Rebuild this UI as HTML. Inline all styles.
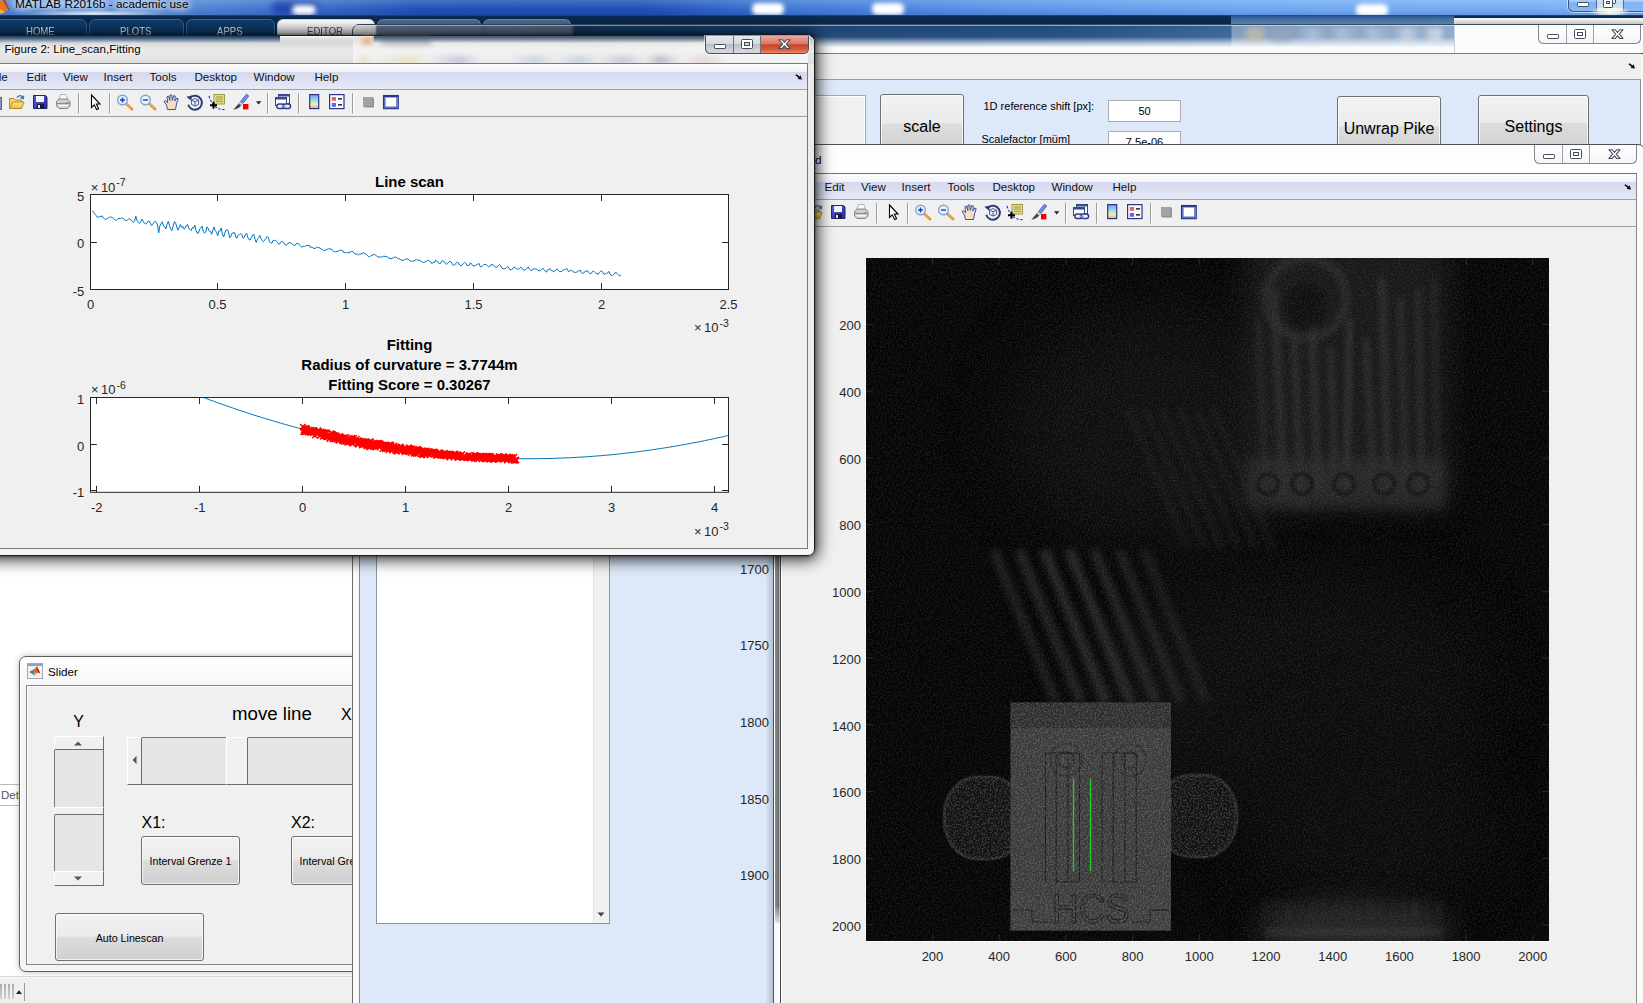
<!DOCTYPE html>
<html lang="en">
<head>
<meta charset="utf-8">
<title>MATLAB R2016b - academic use</title>
<style>
*{box-sizing:border-box;margin:0;padding:0}
html,body{width:1643px;height:1003px;overflow:hidden;background:#fff}
body{position:relative;font-family:"Liberation Sans",sans-serif;font-size:12px;color:#000}
.abs{position:absolute}
.t{position:absolute;white-space:nowrap;line-height:1}
.ui{font-family:"Liberation Sans",sans-serif;font-size:11.6px;color:#111}
.tick{font-size:13px;color:#262626}
.btn{position:absolute;border:1px solid #707070;border-radius:3px;background:linear-gradient(#f2f2f2 0,#ebebeb 48%,#dddddd 50%,#cfcfcf 100%);box-shadow:inset 0 0 0 1px rgba(255,255,255,.7)}
.btn span{position:absolute;left:0;right:0;text-align:center;white-space:nowrap;line-height:1}
.edit{position:absolute;background:#fff;border:1px solid #abadb3}
.menubar{position:absolute;background:linear-gradient(#fdfdfe 0,#f1f3fa 30%,#d5d9ee 34%,#dcdff1 60%,#e6e9f7 100%);border-bottom:1px solid #a0a0a0}
.toolbar{position:absolute;background:#f0f0f0;border-bottom:1px solid #a0a0a0}
.sep{position:absolute;width:1px;background:#a0a0a0;box-shadow:1px 0 0 #fff}
.cap{position:absolute;height:19px;border:1px solid #5a5f66;border-top:none;border-radius:0 0 5.5px 5.5px;overflow:hidden;box-shadow:0 0 0 1px rgba(255,255,255,.55)}
.cap i{position:absolute;top:0;bottom:0;display:block}
</style>
</head>
<body>
<svg width="0" height="0" style="position:absolute">
<defs>
<linearGradient id="gfold" x1="0" y1="0" x2="0" y2="1"><stop offset="0" stop-color="#fbe98f"/><stop offset="1" stop-color="#e9b93a"/></linearGradient>
<linearGradient id="gcb" x1="0" y1="0" x2="0" y2="1"><stop offset="0" stop-color="#8f8fe8"/><stop offset=".4" stop-color="#8fe0ee"/><stop offset=".7" stop-color="#f3f0a0"/><stop offset="1" stop-color="#f0a0a0"/></linearGradient>
<linearGradient id="gsave" x1="0" y1="0" x2="1" y2="1"><stop offset="0" stop-color="#5a5ad8"/><stop offset="1" stop-color="#2a2a98"/></linearGradient>
<g id="tbicons">
 <!-- new (sliver) -->
 <rect x="-12" y="7.5" width="13.5" height="12" fill="#8f94bd" stroke="#5d638f"/>
 <!-- open folder -->
 <path d="M9.5 18.5 L9.5 8.5 L14 8.5 L15.5 10 L21.5 10 L21.5 12" fill="#f4d873" stroke="#b88d1c"/>
 <path d="M9.5 18.5 L12.5 12 L24 12 L21.5 18.5Z" fill="url(#gfold)" stroke="#b88d1c"/>
 <path d="M17 7.5 C19 5 22 5 23 8 M23.8 5.5 L23.2 8.6 L20.4 7.6" fill="none" stroke="#3f6fb8" stroke-width="1.3"/>
 <!-- save -->
 <path d="M33.5 5.5 L45.5 5.5 L47 7 L47 18.5 L33.5 18.5Z" fill="url(#gsave)" stroke="#22227a"/>
 <rect x="36" y="6" width="8" height="6" fill="#f4f4fb"/><rect x="37" y="14" width="7" height="4.5" fill="#1a1a2a"/><rect x="38" y="15" width="2" height="3" fill="#e8e8f0"/>
 <!-- printer -->
 <path d="M59 9.5 L60.5 4.5 L66 4.5 L67.5 9.5Z" fill="#fcfcff" stroke="#8ea3c9" stroke-width=".8"/>
 <path d="M56.5 11.5 L59 9 L67.5 9 L70 11.5 L70 16 L67 18.5 L59 18.5 L56.5 16Z" fill="#cfcfcf" stroke="#7c7c7c" stroke-width=".9"/>
 <path d="M56.5 13.5 L70 13.5" stroke="#8a8a8a"/><path d="M58.5 15.8 L68 15.8" stroke="#f6f6f6" stroke-width="1.4"/><rect x="66.5" y="12" width="1.6" height="1.4" fill="#3bbf3b"/>
 <!-- sep -->
 <path d="M78.5 3 L78.5 23.5 M109.5 3 L109.5 23.5 M267.5 3 L267.5 23.5 M298.5 3 L298.5 23.5 M352.5 3 L352.5 23.5" stroke="#9c9c9c"/>
 <path d="M79.5 3 L79.5 23.5 M110.5 3 L110.5 23.5 M268.5 3 L268.5 23.5 M299.5 3 L299.5 23.5 M353.5 3 L353.5 23.5" stroke="#fdfdfd"/>
 <!-- pointer -->
 <path d="M91.5 5 L91.5 17.5 L94.3 14.8 L96.6 19.6 L98.6 18.7 L96.4 14 L100 14Z" fill="#fff" stroke="#000" stroke-width="1.1" stroke-linejoin="miter"/>
 <!-- zoom in -->
 <path d="M126 13.5 L132 19" stroke="#d98a2b" stroke-width="2.6" stroke-linecap="round"/><path d="M126 13.2 L131.6 18.3" stroke="#f6c46e" stroke-width="1" stroke-linecap="round"/>
 <circle cx="122.5" cy="10" r="4.8" fill="#e9f3fd" stroke="#7fa3d8" stroke-width="1.4"/><path d="M120 10 L125 10 M122.5 7.5 L122.5 12.5" stroke="#1f3f99" stroke-width="1.4"/>
 <!-- zoom out -->
 <path d="M149 13.5 L155 19" stroke="#d98a2b" stroke-width="2.6" stroke-linecap="round"/><path d="M149 13.2 L154.6 18.3" stroke="#f6c46e" stroke-width="1" stroke-linecap="round"/>
 <circle cx="145.5" cy="10" r="4.8" fill="#e9f3fd" stroke="#7fa3d8" stroke-width="1.4"/><path d="M143 10 L148 10" stroke="#1f3f99" stroke-width="1.4"/>
 <!-- hand -->
 <path d="M167.5 19.5 L166.5 15 L164 11.5 L165.3 10.6 L167.6 12.6 L167 6.5 L168.6 6.2 L169.8 10.5 L170 5 L171.8 5 L172.3 10.4 L173.6 5.6 L175.3 6 L174.8 11 L176.8 8 L178.2 8.7 L176.5 14 L175.5 19.5Z" fill="#fbdcc0" stroke="#2f57a8" stroke-width="1" stroke-linejoin="round"/>
 <!-- rotate 3d -->
 <path d="M190.5 7.2 A7 7 0 1 1 188.2 14.8" fill="none" stroke="#2b3c73" stroke-width="2"/><path d="M186.3 6.8 L192 5.6 L191.2 10.8Z" fill="#2b3c73"/>
 <path d="M191.5 10.2 L195 8.6 L198.6 10.2 L198.6 14.4 L195 16 L191.5 14.4Z M191.5 10.2 L195 11.8 L198.6 10.2 M195 11.8 L195 16" fill="#eef1fb" stroke="#3a4f96" stroke-width=".9"/>
 <!-- data cursor -->
 <path d="M209 6 C210.5 11 213 15 216 17.2 C219 19.2 222 19.6 224.5 19.6" fill="none" stroke="#2222e0" stroke-width="1.1" stroke-dasharray="2.4 1.6"/>
 <rect x="214" y="4.5" width="10.5" height="9.5" fill="#e4dd85" stroke="#99923a" stroke-width=".9"/><path d="M216 7 L223 7 M216 9.2 L223 9.2 M216 11.4 L223 11.4" stroke="#8a8440" stroke-width=".8"/>
 <path d="M210 15.2 L217 15.2 M213.5 11.8 L213.5 18.8" stroke="#000" stroke-width="2"/>
 <!-- brush -->
 <path d="M240.5 11.5 L246.5 4.2 L248.8 6 L242.8 13.4Z" fill="#6f8fe0" stroke="#3d55a8" stroke-width=".8"/><path d="M240.5 11.5 L242.8 13.4 L241 15.6 L238.7 13.8Z" fill="#d0d0d0" stroke="#777" stroke-width=".6"/>
 <path d="M238.7 13.8 L241 15.6 C240 18 236.5 19.4 233.2 19.6 C235.4 18 236.4 15.6 238.7 13.8Z" fill="#454545"/>
 <rect x="243" y="14" width="5.4" height="5.4" fill="#f00000"/>
 <path d="M256 11.2 L261.4 11.2 L258.7 14.4Z" fill="#222"/>
 <!-- link -->
 <rect x="278.5" y="4.5" width="11" height="9" fill="#fdfdff" stroke="#34488f"/><rect x="278.5" y="4.5" width="11" height="2" fill="#34488f"/>
 <rect x="275.5" y="7.5" width="11" height="8" fill="#fdfdff" stroke="#34488f"/><rect x="275.5" y="7.5" width="11" height="2" fill="#34488f"/>
 <rect x="276.8" y="14" width="7.6" height="4.6" rx="2.3" fill="#eef1fa" stroke="#2d3f86" stroke-width="1.5"/>
 <rect x="283" y="14" width="7.6" height="4.6" rx="2.3" fill="#eef1fa" stroke="#2d3f86" stroke-width="1.5"/>
 <path d="M281.5 16.3 L286 16.3" stroke="#8fa0d8" stroke-width="1.2"/>
 <!-- colorbar -->
 <rect x="309.7" y="4.6" width="9" height="14" fill="url(#gcb)" stroke="#27358a" stroke-width="1.2"/>
 <!-- legend -->
 <rect x="329.6" y="4.6" width="14.4" height="14" fill="#fafbff" stroke="#27358a" stroke-width="1.2"/>
 <rect x="331.8" y="7" width="4.2" height="3.8" fill="#e46464"/><rect x="331.8" y="13" width="4.2" height="3.8" fill="#6464e4"/><path d="M338 8.9 L342 8.9 M338 14.9 L342 14.9" stroke="#000" stroke-width="1.1"/>
 <!-- gray square -->
 <rect x="364.5" y="8.5" width="9.5" height="9" fill="#8e8e8e"/><rect x="363.5" y="7.5" width="9.5" height="9" fill="#a2a2a2" stroke="#8a8a8a" stroke-width=".6"/>
 <!-- dock -->
 <rect x="383.6" y="5.6" width="14.6" height="13" fill="#fff" stroke="#27358a" stroke-width="1.3"/><rect x="383.6" y="5.6" width="14.6" height="1.8" fill="#27358a"/>
 <path d="M384 7.5 L385.6 7.5 L385.6 16.5 L384 16.5Z M396.2 7.5 L397.8 7.5 L397.8 16.5 L396.2 16.5Z M384 16.5 L397.8 16.5 L397.8 18.2 L384 18.2Z" fill="#5b6fc0"/>
</g>
</defs>
</svg>
<!-- ===== MATLAB main window (bottom layer) ===== -->
<div class="abs" id="mtitle" style="left:0;top:0;width:1643px;height:15px;background:linear-gradient(90deg,#4d86d6 0,#5f94dc 120px,#3a6fcb 300px,#1f52b6 420px,#1d50b4 640px,#3f7ad8 800px,#5a94e8 1000px,#6ea8f4 1250px,#78b0f6 1643px)"></div>
<div class="abs" style="left:0;top:0;width:1643px;height:15px;background:linear-gradient(rgba(255,255,255,.18) 0,rgba(255,255,255,0) 60%,rgba(0,0,40,.12) 100%)"></div>
<!-- glass reflections -->
<div class="abs" style="left:20px;top:10px;width:150px;height:6px;background:radial-gradient(ellipse at 50% 60%,rgba(255,255,255,.85) 0,rgba(255,255,255,0) 70%)"></div>
<div class="abs" style="left:272px;top:2px;width:46px;height:13px;border-radius:5px;background:#1d3fa8;filter:blur(3px);opacity:.8"></div>
<div class="abs" style="left:292px;top:5px;width:24px;height:10px;border-radius:5px;background:#fff;filter:blur(2.5px)"></div>
<div class="abs" style="left:752px;top:3px;width:32px;height:12px;border-radius:5px;background:#fff;filter:blur(2px)"></div>
<div class="abs" style="left:872px;top:3px;width:32px;height:12px;border-radius:5px;background:#fff;filter:blur(2px)"></div>
<div class="abs" style="left:1356px;top:4px;width:32px;height:12px;border-radius:5px;background:#fff;filter:blur(2px)"></div>
<!-- matlab logo sliver -->
<svg class="abs" style="left:0;top:0" width="12" height="14" viewBox="0 0 12 14"><path d="M0 1 L3 0 L8 9 L5 12 L0 13Z" fill="#e8731c"/><path d="M3 0 L5 0 L10 11 L8 9Z" fill="#a8321a"/><path d="M0 9 L5 12 L0 14Z" fill="#f7b13c"/></svg>
<div class="t" style="left:15px;top:-1.7px;font-size:11.75px;color:#000;text-shadow:0 0 6px #fff,0 0 8px #fff,0 0 10px rgba(255,255,255,.9)">MATLAB R2016b - academic use</div>
<!-- main caption buttons (top right) -->
<div class="cap" style="left:1568px;top:-8px;width:82px;height:19.5px;border-color:#3c5a8e;background:linear-gradient(rgba(255,255,255,.42) 0,rgba(255,255,255,.22) 50%,rgba(110,165,235,.3) 54%,rgba(160,200,250,.45) 100%)">
 <i style="left:27px;width:1px;background:#4f6c9c"></i><i style="left:54.2px;width:1px;background:#4f6c9c"></i>
 <i style="left:28px;width:26px;background:linear-gradient(rgba(255,255,255,.25),rgba(255,252,230,.75))"></i>
</div>
<div class="abs" style="left:1590px;top:8px;width:40px;height:9px;background:radial-gradient(ellipse at 50% 40%,rgba(255,255,255,.95) 0,rgba(255,253,235,.7) 40%,rgba(255,255,255,0) 72%)"></div>
<div class="abs" style="left:1577.3px;top:2px;width:11.7px;height:4.8px;background:#fff;border:1.2px solid #434c66;border-radius:1.2px"></div>
<div class="abs" style="left:1606px;top:-5px;width:9.5px;height:9px;border:1.2px solid #434c66;background:#e9eef8;border-radius:1.2px"></div>
<div class="abs" style="left:1603px;top:-2.5px;width:10px;height:10px;border:1.2px solid #434c66;background:#fff;border-radius:1.2px"></div>
<div class="abs" style="left:1606px;top:.8px;width:4.2px;height:3.6px;border:1.2px solid #434c66;background:#dfe5f2"></div>
<!-- toolstrip dark band -->
<div class="abs" style="left:0;top:14.5px;width:1643px;height:22px;background:linear-gradient(#1f4a8c 0,#0a2c55 1.5px,#08284c 5px,#0a2d55 100%)"></div>
<!-- tabs -->
<div class="abs" style="left:-10px;top:19px;width:97px;height:20px;border:1px solid #3d6791;border-radius:6px 6px 0 0;background:linear-gradient(#0e3a69,#0f3d6d)"></div>
<div class="abs" style="left:89px;top:19px;width:95px;height:20px;border:1px solid #3d6791;border-radius:6px 6px 0 0;background:linear-gradient(#0e3a69,#0f3d6d)"></div>
<div class="abs" style="left:186px;top:19px;width:89px;height:20px;border:1px solid #3d6791;border-radius:6px 6px 0 0;background:linear-gradient(#0e3a69,#0f3d6d)"></div>
<div class="abs" style="left:277px;top:19px;width:98px;height:20px;border:1px solid #d8d8d8;border-radius:6px 6px 0 0;background:linear-gradient(#ffffff,#e9e9e9)"></div>
<div class="t" style="left:26px;top:26.4px;font-size:11px;color:#eef2f7;transform:scaleX(.87);transform-origin:0 0">HOME</div>
<div class="t" style="left:119.5px;top:26.4px;font-size:11px;color:#eef2f7;transform:scaleX(.87);transform-origin:0 0">PLOTS</div>
<div class="t" style="left:217px;top:26.4px;font-size:11px;color:#eef2f7;transform:scaleX(.87);transform-origin:0 0">APPS</div>
<div class="t" style="left:307px;top:26.4px;font-size:11px;color:#4a4a4a;transform:scaleX(.87);transform-origin:0 0">EDITOR</div>
<div class="abs" style="left:376.7px;top:19px;width:104.3px;height:20px;border:1px solid #6886a8;border-bottom:none;border-radius:6px 6px 0 0;background:linear-gradient(#4a6b90,#3c5c82)"></div>
<div class="abs" style="left:483px;top:19px;width:88px;height:20px;border:1px solid #6886a8;border-bottom:none;border-radius:6px 6px 0 0;background:linear-gradient(#4a6b90,#3c5c82)"></div>
<!-- quick access strip + search -->
<div class="abs" style="left:1231px;top:15px;width:223px;height:12px;background:linear-gradient(#1b4a82 0,#3c6a9f 3px,#5a82ae 10px)"></div>
<div class="abs" style="left:1454px;top:18.3px;width:189px;height:8px;background:linear-gradient(#fbfbfb 0,#ececec 2px,#c9c9c9 5.5px)"></div>
<!-- editor white area + status bar -->
<div class="abs" style="left:0;top:540px;width:360px;height:437px;background:#fff"></div>
<div class="abs" style="left:0;top:976px;width:360px;height:27px;background:#f0f0f0;border-top:1px solid #d9d9d9"></div>
<div class="abs" style="left:0;top:977px;width:360px;height:1px;background:#fbfbfb"></div>
<div class="abs" style="left:0;top:984px;width:14px;height:15px;background:repeating-linear-gradient(90deg,#a9a9a9 0,#a9a9a9 2px,#f0f0f0 2px,#f0f0f0 4px);-webkit-mask-image:linear-gradient(#000,rgba(0,0,0,.4));mask-image:linear-gradient(#000,rgba(0,0,0,.4))"></div>
<svg class="abs" style="left:16px;top:990px" width="6" height="4"><path d="M0 4 L3 0.3 L6 4Z" fill="#222"/></svg>
<div class="abs" style="left:24px;top:983px;width:1px;height:18px;background:#9a9a9a"></div>
<!-- "Det" tab -->
<div class="abs" style="left:-2px;top:784px;width:22px;height:22px;border:1px solid #b9b9b9;background:#fff"></div>
<div class="t" style="left:1px;top:790px;font-size:11.5px;color:#555">Det</div>
<!-- ===== Slider window ===== -->
<div class="abs" id="sliderwin" style="left:19px;top:656px;width:420px;height:316px;border:1px solid #5d5d5d;border-radius:7px;background:linear-gradient(#fdfdfd,#f6f6f6 30px,#f4f4f4);box-shadow:0 0 6px rgba(0,0,0,.28),inset 0 0 0 1px #fff"></div>
<div class="abs" style="left:26px;top:685px;width:420px;height:280px;border:1px solid #868686;background:#f0f0f0;box-shadow:inset 1px 1px 0 #fff"></div>
<!-- icon -->
<svg class="abs" style="left:27px;top:663px" width="16" height="16" viewBox="0 0 16 16">
<rect x="0.5" y="0.5" width="15" height="15" fill="#f4f4f4" stroke="#a3a9b3"/><rect x="1" y="1" width="14" height="2" fill="#7ea3d0"/>
<path d="M2 9 L6.5 6.5 L8 9 L6.8 12 L5 10.8Z" fill="#3f7fc4"/><path d="M6.5 6.5 C8 5.5 9 4 9.8 3.3 C10.6 4 11.5 7 13.3 10.6 C12.3 10 11.6 9.4 11 9.3 C10 10.3 9 12 7.5 13 L6.8 12 L8 9Z" fill="#e8661c"/><path d="M9.8 3.3 C10.6 4 11.5 7 13.3 10.6 C12.3 10 11.6 9.4 11 9.3 C10.5 7 10.2 5 9.8 3.3Z" fill="#8e1d13"/><path d="M6.8 12 L7.5 13 C8.3 12.4 9 11.4 9.5 10.6 L8 9Z" fill="#f8bd3a"/>
</svg>
<div class="t" style="left:48px;top:665.5px;font-size:11.7px;color:#000;text-shadow:0 0 5px #fff">Slider</div>
<div class="t" style="left:73px;top:714px;font-size:16px;width:11px;text-align:center">Y</div>
<div class="t" style="left:232px;top:705.3px;font-size:18.67px">move line</div>
<div class="t" style="left:341px;top:707px;font-size:16px">X</div>
<div class="t" style="left:141.5px;top:815px;font-size:16px">X1:</div>
<div class="t" style="left:291px;top:815px;font-size:16px">X2:</div>
<!-- vertical slider -->
<div class="abs" style="left:53.5px;top:736px;width:50px;height:149.5px;background:#e6e6e6;border-left:1px solid #7a7a7a;border-right:1.5px solid #6d6d6d;border-bottom:1.5px solid #6d6d6d"></div>
<div class="abs" style="left:53.5px;top:736px;width:50px;height:14px;background:#f0f0f0;border-top:1px solid #fff;border-left:1px solid #fff;border-right:1.5px solid #6d6d6d;border-bottom:1.5px solid #6d6d6d"></div>
<div class="abs" style="left:53.5px;top:806.5px;width:50px;height:8.5px;background:#f0f0f0;border-top:1px solid #fff;border-left:1px solid #fff;border-right:1.5px solid #6d6d6d;border-bottom:1.5px solid #6d6d6d"></div>
<div class="abs" style="left:53.5px;top:870.5px;width:50px;height:15px;background:#f0f0f0;border-top:1px solid #fff;border-left:1px solid #fff;border-right:1.5px solid #6d6d6d;border-bottom:1.5px solid #6d6d6d"></div>
<svg class="abs" style="left:74px;top:741px" width="8" height="5"><path d="M0 4.5 L4 0.5 L8 4.5Z" fill="#555"/></svg>
<svg class="abs" style="left:74px;top:876px" width="8" height="5"><path d="M0 0.5 L4 4.5 L8 0.5Z" fill="#555"/></svg>
<!-- horizontal slider -->
<div class="abs" style="left:126.5px;top:737px;width:300px;height:48px;background:#e6e6e6;border-top:1px solid #7a7a7a;border-bottom:1.5px solid #6d6d6d"></div>
<div class="abs" style="left:126.5px;top:737px;width:15px;height:48px;background:#f0f0f0;border-top:1px solid #fff;border-left:1px solid #fff;border-right:1.5px solid #6d6d6d;border-bottom:1.5px solid #6d6d6d"></div>
<div class="abs" style="left:225.5px;top:737px;width:22px;height:48px;background:#f0f0f0;border-top:1px solid #fff;border-left:1.5px solid #fff;border-right:1.5px solid #6d6d6d;border-bottom:1.5px solid #6d6d6d"></div>
<svg class="abs" style="left:131.5px;top:756px" width="5" height="8"><path d="M4.5 0 L0.5 4 L4.5 8Z" fill="#555"/></svg>
<!-- buttons -->
<div class="btn" style="left:141px;top:836px;width:99px;height:49px"><span style="top:18.5px;font-size:10.7px">Interval Grenze 1</span></div>
<div class="btn" style="left:291px;top:836px;width:99px;height:49px"><span style="top:18.5px;font-size:10.7px">Interval Grenze 2</span></div>
<div class="btn" style="left:55px;top:913px;width:149px;height:48px"><span style="top:18.5px;font-size:10.7px">Auto Linescan</span></div>
<!-- ===== Middle GUI window ===== -->
<!-- glass title bar -->
<div class="abs" style="left:352px;top:24px;width:1300px;height:30px;border:1px solid #3c4a5e;border-radius:7px 7px 0 0;background:linear-gradient(90deg,#ececec 0,#e2e2e2 22px,#5f748b 24px,#5a6f87 128px,#4f6580 131px,#5a6f87 134px,#55697f 218px,#14385f 222px,#123a66 300px,#1c4474 462px,#214b7f 700px,#3a6498 878px,#7d9cc0 879px,#8eaacb 1101px,#fcfcfc 1102px)"></div>
<div class="abs" style="left:353px;top:25px;width:1300px;height:1px;background:rgba(255,255,255,.5)"></div>
<!-- fade dark -> white towards bottom -->
<div class="abs" style="left:814px;top:26px;width:640px;height:27px;background:linear-gradient(rgba(255,255,255,0) 0,rgba(255,255,255,.04) 40%,rgba(255,255,255,.6) 62%,#fbfbfb 80%)"></div>
<!-- blurred icons in quick-access -->
<div class="abs" style="left:1242px;top:27px;width:200px;height:15px;filter:blur(2.5px);opacity:.6;background:linear-gradient(90deg,rgba(0,0,0,0) 0,#d8c8a0 8px,#d8c8a0 18px,rgba(0,0,0,0) 26px,#9aa4b8 34px,#9aa4b8 46px,rgba(0,0,0,0) 54px,#c4d0e4 70px,rgba(0,0,0,0) 86px,#c4d0e4 100px,rgba(0,0,0,0) 118px,#c4d0e4 130px,rgba(0,0,0,0) 150px,#e8e8f0 165px,rgba(0,0,0,0) 180px,#e8e8f0 190px)"></div>
<!-- caption buttons -->
<div class="cap" style="left:1538.0px;top:25.0px;width:102.5px;height:18.5px;border-color:#7f858f;background:linear-gradient(#fefefe,#f5f5f5)">
 <i style="left:27.2px;width:1px;background:#9a9fa8"></i><i style="left:54.2px;width:1px;background:#9a9fa8"></i>
</div>
<div class="abs" style="left:1546.7px;top:33.5px;width:12.3px;height:5.2px;background:#fff;border:1.2px solid #434a5c;border-radius:1.2px"></div>
<div class="abs" style="left:1573.7px;top:28.7px;width:12.3px;height:10px;border:1.2px solid #434a5c;background:#fff;border-radius:1.5px"></div>
<div class="abs" style="left:1576.6px;top:31.8px;width:6.5px;height:4px;border:1.2px solid #434a5c;background:#fff"></div>
<svg class="abs" style="left:1611.2px;top:28.7px" width="13" height="10.2" viewBox="0 0 14 11" preserveAspectRatio="none"><path d="M1 0.8 L4.6 0.8 L7 3.6 L9.4 0.8 L13 0.8 L8.9 5.5 L13 10.2 L9.4 10.2 L7 7.4 L4.6 10.2 L1 10.2 L5.1 5.5Z" fill="#fff" stroke="#434a5c" stroke-width="1.15" stroke-linejoin="round"/></svg>
<div class="abs" style="left:358px;top:24px;width:1285px;height:1px;background:#3c4a5e"></div>
<!-- left frame -->
<div class="abs" style="left:352px;top:54px;width:8px;height:960px;background:#fafafa;border-left:1px solid #6e6e6e;border-right:1px solid #8a8a8a"></div>
<!-- right frame -->
<div class="abs" style="left:1640px;top:54px;width:8px;height:960px;background:#fafafa;border-left:1px solid #8a8a8a"></div>
<!-- menubar -->
<div class="abs" style="left:360px;top:53px;width:1281px;height:27px;background:#f0f0f0;border-top:1px solid #7b7b7b;border-bottom:1px solid #9a9a9a"></div>
<svg class="abs" style="left:1627.5px;top:62.8px" width="7" height="6" viewBox="0 0 7 6"><path d="M0.3 1.2 L1.6 0.2 L4.6 2.6 L5.6 1.3 L7 5.6 L2.6 5 L3.6 3.8 L0.3 1.2Z" fill="#0a0a0a"/></svg>
<!-- blue panel -->
<div class="abs" style="left:360px;top:80px;width:1280px;height:930px;background:#dde9f9"></div>
<!-- panel widgets (top strip) -->
<div class="abs" style="left:800px;top:95px;width:66px;height:60px;background:#f0f0f0;border:1px solid #a7a7a7;box-shadow:inset -1px 1px 0 #fff"></div>
<div class="btn" style="left:880px;top:94px;width:84px;height:60px"><span style="top:23.5px;font-size:16px">scale</span></div>
<div class="t" style="left:983.5px;top:101px;font-size:11px">1D reference shift [px]:</div>
<div class="t" style="left:981.5px;top:133.5px;font-size:11px">Scalefactor [müm]</div>
<div class="edit" style="left:1108px;top:100px;width:73px;height:22px"></div>
<div class="t" style="left:1108px;width:73px;text-align:center;top:106px;font-size:11px">50</div>
<div class="edit" style="left:1108px;top:131px;width:73px;height:22px"></div>
<div class="t" style="left:1108px;width:73px;text-align:center;top:136.5px;font-size:11px">7.5e-06</div>
<div class="btn" style="left:1337px;top:96px;width:104px;height:62px"><span style="top:23.5px;font-size:16px">Unwrap Pike</span></div>
<div class="btn" style="left:1478px;top:95px;width:111px;height:57px"><span style="top:23px;font-size:16px">Settings</span></div>
<!-- listbox -->
<div class="abs" style="left:376px;top:500px;width:234px;height:424px;background:#fff;border:1px solid #8b94a3"></div>
<div class="abs" style="left:593px;top:501px;width:16px;height:422px;background:#f0f0f0;border-left:1px solid #e3e3e3"></div>
<svg class="abs" style="left:597px;top:912px" width="8" height="5"><path d="M0.5 0.5 L4 4.5 L7.5 0.5Z" fill="#444"/></svg>
<!-- axes tick labels -->
<div class="t tick" style="right:874px;top:563.2px">1700</div>
<div class="t tick" style="right:874px;top:639.3px">1750</div>
<div class="t tick" style="right:874px;top:716px">1800</div>
<div class="t tick" style="right:874px;top:792.7px">1850</div>
<div class="t tick" style="right:874px;top:869.3px">1900</div>
<!-- ===== Third window: figure with image ===== -->
<!-- soft shadow on left of frame -->
<div class="abs" style="left:765px;top:150px;width:9px;height:860px;background:linear-gradient(90deg,rgba(60,70,90,0),rgba(60,70,90,.28))"></div>
<div class="abs" id="w3" style="left:773px;top:144px;width:871.5px;height:870px;border:1px solid #4f5258;border-radius:7px 7px 0 0;background:linear-gradient(#fdfdfd,#fbfbfb)"></div>
<!-- left frame fill -->
<div class="abs" style="left:774px;top:174px;width:7px;height:749px;background:linear-gradient(90deg,#fff 0,#fff 1px,#888c91 1.4px,#66686a 5px,#b4b4b4 5.2px,#b4b4b4 6px,#333 6.2px)"></div>
<div class="abs" style="left:774px;top:905px;width:6px;height:100px;background:linear-gradient(rgba(255,255,255,0),#fafafa 22px)"></div>
<div class="abs" style="left:780px;top:174px;width:1px;height:840px;background:#4a4a4a"></div>
<!-- client -->
<div class="abs" style="left:781px;top:173px;width:856px;height:840px;background:#f0f0f0;border-top:1px solid #6f6f6f;border-right:1px solid #8a8a8a;border-left:1px solid #fff"></div>
<div class="t" style="left:815px;top:153.6px;font-size:11.7px;color:#000">d</div>
<!-- caption buttons -->
<div class="cap" style="left:1534.3px;top:145.0px;width:102.5px;height:18.5px;border-color:#7f858f;background:linear-gradient(#fefefe,#f5f5f5)">
 <i style="left:27.2px;width:1px;background:#9a9fa8"></i><i style="left:54.2px;width:1px;background:#9a9fa8"></i>
</div>
<div class="abs" style="left:1543.0px;top:153.5px;width:12.3px;height:5.2px;background:#fff;border:1.2px solid #434a5c;border-radius:1.2px"></div>
<div class="abs" style="left:1570.0px;top:148.7px;width:12.3px;height:10px;border:1.2px solid #434a5c;background:#fff;border-radius:1.5px"></div>
<div class="abs" style="left:1572.8999999999999px;top:151.8px;width:6.5px;height:4px;border:1.2px solid #434a5c;background:#fff"></div>
<svg class="abs" style="left:1607.5px;top:148.7px" width="13" height="10.2" viewBox="0 0 14 11" preserveAspectRatio="none"><path d="M1 0.8 L4.6 0.8 L7 3.6 L9.4 0.8 L13 0.8 L8.9 5.5 L13 10.2 L9.4 10.2 L7 7.4 L4.6 10.2 L1 10.2 L5.1 5.5Z" fill="#fff" stroke="#434a5c" stroke-width="1.15" stroke-linejoin="round"/></svg>
<div class="abs" style="left:779px;top:144px;width:860px;height:1px;background:#4f5258"></div>
<!-- menubar -->
<div class="menubar" style="left:781px;top:174px;width:855px;height:26px"></div>
<div class="t ui" style="left:824.5px;top:181px">Edit</div>
<div class="t ui" style="left:861px;top:181px">View</div>
<div class="t ui" style="left:901.5px;top:181px">Insert</div>
<div class="t ui" style="left:947.5px;top:181px">Tools</div>
<div class="t ui" style="left:992.5px;top:181px">Desktop</div>
<div class="t ui" style="left:1051.5px;top:181px">Window</div>
<div class="t ui" style="left:1112.5px;top:181px">Help</div>
<svg class="abs" style="left:1624.3px;top:183.6px" width="7" height="6" viewBox="0 0 7 6"><path d="M0.3 1.2 L1.6 0.2 L4.6 2.6 L5.6 1.3 L7 5.6 L2.6 5 L3.6 3.8 L0.3 1.2Z" fill="#0a0a0a"/></svg>
<!-- toolbar -->
<div class="toolbar" style="left:781px;top:200px;width:855px;height:27px"></div>
<div id="tb3" class="abs" style="left:798px;top:200px;width:420px;height:26px"><svg width="420" height="26" viewBox="0 0 420 26"><use href="#tbicons"/></svg></div>
<!-- image axes -->
<div class="abs" style="left:865px;top:258px;width:684px;height:684px;background:#fbfbfb"></div>
<svg class="abs" style="left:866px;top:258px" width="683" height="683" viewBox="0 0 683 683">
<defs>
<filter id="nz" x="0" y="0" width="100%" height="100%" color-interpolation-filters="sRGB"><feTurbulence type="fractalNoise" baseFrequency="0.62" numOctaves="2" seed="3" result="t"/><feColorMatrix type="matrix" values="0 0 0 0 1  0 0 0 0 1  0 0 0 0 1  4.2 0 0 0 -1.85"/><feComposite operator="in" in2="SourceGraphic"/></filter>
<filter id="nz2" x="0" y="0" width="100%" height="100%" color-interpolation-filters="sRGB"><feTurbulence type="fractalNoise" baseFrequency="0.75" numOctaves="2" seed="11"/><feColorMatrix type="matrix" values="0 0 0 0 0  0 0 0 0 0  0 0 0 0 0  0 2.2 0 0 -0.75"/><feComposite operator="in" in2="SourceGraphic"/></filter>
<filter id="b3" x="-100%" y="-100%" width="300%" height="300%" color-interpolation-filters="sRGB"><feGaussianBlur stdDeviation="3"/></filter>
<filter id="b6" x="-100%" y="-100%" width="300%" height="300%" color-interpolation-filters="sRGB"><feGaussianBlur stdDeviation="6"/></filter>
<filter id="b12" x="-100%" y="-100%" width="300%" height="300%" color-interpolation-filters="sRGB"><feGaussianBlur stdDeviation="14"/></filter>
<filter id="b25" x="-100%" y="-100%" width="300%" height="300%" color-interpolation-filters="sRGB"><feGaussianBlur stdDeviation="28"/></filter>
<filter id="b1" x="-100%" y="-100%" width="300%" height="300%" color-interpolation-filters="sRGB"><feGaussianBlur stdDeviation="1.2"/></filter>
<clipPath id="cimg"><rect x="0" y="0" width="683" height="683"/></clipPath>
<clipPath id="cchip"><rect x="144.5" y="444.5" width="160.5" height="228"/></clipPath>
<clipPath id="ctr"><rect x="360" y="0" width="250" height="285"/></clipPath>
</defs>
<g clip-path="url(#cimg)">
<rect width="683" height="683" fill="#050505"/>
<ellipse cx="290" cy="170" rx="150" ry="120" fill="#0e0e0e" filter="url(#b25)"/>
<ellipse cx="420" cy="430" rx="200" ry="120" fill="#0c0c0c" filter="url(#b25)"/>
<ellipse cx="500" cy="560" rx="120" ry="100" fill="#0b0b0b" filter="url(#b25)"/>
<g clip-path="url(#ctr)">
<rect x="380" y="-20" width="204" height="272" rx="20" fill="#181818" filter="url(#b12)"/>
<path d="M392 60 L400 230" stroke="#3e3e3e" stroke-width="5" opacity="0.4" filter="url(#b3)" fill="none"/>
<path d="M408 30 L418 240" stroke="#3e3e3e" stroke-width="6" opacity="0.55" filter="url(#b3)" fill="none"/>
<path d="M428 80 L436 250" stroke="#3e3e3e" stroke-width="5" opacity="0.6" filter="url(#b3)" fill="none"/>
<path d="M446 60 L452 235" stroke="#3e3e3e" stroke-width="6" opacity="0.6" filter="url(#b3)" fill="none"/>
<path d="M464 90 L470 230" stroke="#3e3e3e" stroke-width="5" opacity="0.6" filter="url(#b3)" fill="none"/>
<path d="M484 60 L480 235" stroke="#3e3e3e" stroke-width="6" opacity="0.65" filter="url(#b3)" fill="none"/>
<path d="M500 80 L508 235" stroke="#3e3e3e" stroke-width="5" opacity="0.6" filter="url(#b3)" fill="none"/>
<path d="M516 20 L522 230" stroke="#3e3e3e" stroke-width="6" opacity="0.6" filter="url(#b3)" fill="none"/>
<path d="M534 40 L540 235" stroke="#3e3e3e" stroke-width="5" opacity="0.55" filter="url(#b3)" fill="none"/>
<path d="M552 30 L556 235" stroke="#3e3e3e" stroke-width="5" opacity="0.5" filter="url(#b3)" fill="none"/>
<path d="M568 20 L572 225" stroke="#3e3e3e" stroke-width="5" opacity="0.4" filter="url(#b3)" fill="none"/>
<ellipse cx="440" cy="40" rx="40" ry="40" fill="none" stroke="#303030" stroke-width="8" opacity=".7" filter="url(#b3)"/>
<ellipse cx="440" cy="48" rx="20" ry="24" fill="#0e0e0e" opacity=".8" filter="url(#b3)"/>
<rect x="380" y="200" width="200" height="50" fill="#2c2c2c" opacity=".7" filter="url(#b6)"/>
<circle cx="402" cy="226" r="10" fill="none" stroke="#101010" stroke-width="4" opacity=".7" filter="url(#b1)"/>
<circle cx="436" cy="226" r="10" fill="none" stroke="#101010" stroke-width="4" opacity=".7" filter="url(#b1)"/>
<circle cx="478" cy="226" r="10" fill="none" stroke="#101010" stroke-width="4" opacity=".7" filter="url(#b1)"/>
<circle cx="518" cy="226" r="10" fill="none" stroke="#101010" stroke-width="4" opacity=".7" filter="url(#b1)"/>
<circle cx="552" cy="226" r="10" fill="none" stroke="#101010" stroke-width="4" opacity=".7" filter="url(#b1)"/>
</g>
<g filter="url(#b3)">
<path d="M128 292 L190 444" stroke="#2e2e2e" stroke-width="10" opacity="0.55" fill="none"/>
<path d="M153 292 L215 444" stroke="#2e2e2e" stroke-width="10" opacity="0.67" fill="none"/>
<path d="M178 292 L240 444" stroke="#2e2e2e" stroke-width="10" opacity="0.79" fill="none"/>
<path d="M203 292 L265 444" stroke="#2e2e2e" stroke-width="10" opacity="0.79" fill="none"/>
<path d="M228 292 L290 444" stroke="#2e2e2e" stroke-width="10" opacity="0.67" fill="none"/>
<path d="M253 292 L315 444" stroke="#2e2e2e" stroke-width="10" opacity="0.55" fill="none"/>
<path d="M278 292 L340 444" stroke="#2e2e2e" stroke-width="10" opacity="0.43" fill="none"/>
</g>
<g filter="url(#b3)" opacity=".55">
<path d="M262 150 L322 290" stroke="#222" stroke-width="6" fill="none"/>
<path d="M279 150 L339 290" stroke="#222" stroke-width="6" fill="none"/>
<path d="M296 150 L356 290" stroke="#222" stroke-width="6" fill="none"/>
<path d="M313 150 L373 290" stroke="#222" stroke-width="6" fill="none"/>
<path d="M330 150 L390 290" stroke="#222" stroke-width="6" fill="none"/>
<path d="M347 150 L407 290" stroke="#222" stroke-width="6" fill="none"/>
</g>
<ellipse cx="488" cy="672" rx="100" ry="26" fill="#262626" filter="url(#b12)"/>
<g filter="url(#b3)" opacity=".8">
<path d="M400.0 642 L400.0 662" stroke="#444" stroke-width="4" opacity="0.43"/>
<path d="M411.5 642 L411.5 662" stroke="#444" stroke-width="4" opacity="0.36"/>
<path d="M423.0 642 L423.0 662" stroke="#444" stroke-width="4" opacity="0.56"/>
<path d="M434.5 642 L434.5 662" stroke="#444" stroke-width="4" opacity="0.33"/>
<path d="M446.0 642 L446.0 662" stroke="#444" stroke-width="4" opacity="0.51"/>
<path d="M457.5 642 L457.5 662" stroke="#444" stroke-width="4" opacity="0.45"/>
<path d="M469.0 642 L469.0 662" stroke="#444" stroke-width="4" opacity="0.32"/>
<path d="M480.5 642 L480.5 662" stroke="#444" stroke-width="4" opacity="0.50"/>
<path d="M492.0 642 L492.0 662" stroke="#444" stroke-width="4" opacity="0.31"/>
<path d="M503.5 642 L503.5 662" stroke="#444" stroke-width="4" opacity="0.47"/>
<path d="M515.0 642 L515.0 662" stroke="#444" stroke-width="4" opacity="0.33"/>
<path d="M526.5 642 L526.5 662" stroke="#444" stroke-width="4" opacity="0.34"/>
<path d="M538.0 642 L538.0 662" stroke="#444" stroke-width="4" opacity="0.47"/>
<path d="M549.5 642 L549.5 662" stroke="#444" stroke-width="4" opacity="0.63"/>
<path d="M561.0 642 L561.0 662" stroke="#444" stroke-width="4" opacity="0.35"/>
<path d="M572.5 642 L572.5 662" stroke="#444" stroke-width="4" opacity="0.39"/>
<path d="M400 674 L575 674" stroke="#363636" stroke-width="6"/>
</g>
<rect x="77" y="518" width="82" height="84" rx="34" ry="40" fill="#111111"/>
<rect x="78" y="519" width="80" height="82" rx="33" ry="39" fill="none" stroke="#303030" stroke-width="2" filter="url(#b1)"/>
<rect x="77" y="518" width="82" height="84" rx="34" ry="40" fill="#fff" filter="url(#nz)" opacity=".11"/>
<rect x="290" y="516" width="82" height="84" rx="34" ry="40" fill="#111111"/>
<rect x="291" y="517" width="80" height="82" rx="33" ry="39" fill="none" stroke="#303030" stroke-width="2" filter="url(#b1)"/>
<rect x="290" y="516" width="82" height="84" rx="34" ry="40" fill="#fff" filter="url(#nz)" opacity=".11"/>
<rect x="144.5" y="444.5" width="160.5" height="228" fill="#404040"/>
<g clip-path="url(#cchip)">
<rect x="144" y="444" width="162" height="26" fill="#2c2c2c" opacity=".6"/>
<rect x="144" y="640" width="162" height="33" fill="#444" opacity=".5"/>
<circle cx="200" cy="502" r="4" fill="none" stroke="#4e4e4e" stroke-width="1.6" opacity=".7"/>
<circle cx="200" cy="502" r="8" fill="none" stroke="#2a2a2a" stroke-width="1.6" opacity=".7"/>
<circle cx="200" cy="502" r="12" fill="none" stroke="#4c4c4c" stroke-width="1.6" opacity=".7"/>
<circle cx="200" cy="502" r="16" fill="none" stroke="#2e2e2e" stroke-width="1.6" opacity=".7"/>
<circle cx="200" cy="502" r="20" fill="none" stroke="#464646" stroke-width="1.6" opacity=".7"/>
<circle cx="264" cy="502" r="4" fill="none" stroke="#4e4e4e" stroke-width="1.6" opacity=".7"/>
<circle cx="264" cy="502" r="8" fill="none" stroke="#2a2a2a" stroke-width="1.6" opacity=".7"/>
<circle cx="264" cy="502" r="12" fill="none" stroke="#4c4c4c" stroke-width="1.6" opacity=".7"/>
<circle cx="264" cy="502" r="16" fill="none" stroke="#2e2e2e" stroke-width="1.6" opacity=".7"/>
<circle cx="264" cy="502" r="20" fill="none" stroke="#464646" stroke-width="1.6" opacity=".7"/>
<path d="M179.5 495 L179.5 624" stroke="#161616" stroke-width="1" opacity=".85"/>
<path d="M190.2 495 L190.2 624" stroke="#161616" stroke-width="1" opacity=".85"/>
<path d="M202 495 L202 624" stroke="#161616" stroke-width="1" opacity=".85"/>
<path d="M213.5 495 L213.5 624" stroke="#161616" stroke-width="1" opacity=".85"/>
<path d="M236 495 L236 624" stroke="#161616" stroke-width="1" opacity=".85"/>
<path d="M247.2 495 L247.2 624" stroke="#161616" stroke-width="1" opacity=".85"/>
<path d="M259 495 L259 624" stroke="#161616" stroke-width="1" opacity=".85"/>
<path d="M270.2 495 L270.2 624" stroke="#161616" stroke-width="1" opacity=".85"/>
<path d="M179.5 495 L213.5 495 M236 495 L270.2 495 M236 624 L270.2 624 M190 624 L214 624" stroke="#161616" stroke-width="1" fill="none" opacity=".85"/>
<path d="M147 652 L166 652 L166 664 L186 664 M303 652 L284 652 L284 664 L266 664" stroke="#161616" stroke-width="1" fill="none" opacity=".85"/>
<text x="186" y="664.5" font-family="Liberation Sans, sans-serif" font-size="42" textLength="78" lengthAdjust="spacingAndGlyphs" fill="none" stroke="#1b1b1b" stroke-width="1.1" opacity=".9">HCS</text>
</g>
<rect width="683" height="683" fill="#fff" filter="url(#nz)" opacity=".07"/>
<rect x="144.5" y="444.5" width="160.5" height="228" fill="#000" filter="url(#nz2)" opacity=".22"/>
<rect x="144.5" y="444.5" width="160.5" height="228" fill="#fff" filter="url(#nz)" opacity=".09"/>
<path d="M207.5 520.5 L207.5 613" stroke="#21d321" stroke-width="1.3"/>
<path d="M224.5 520.5 L224.5 613" stroke="#21d321" stroke-width="1.3"/>
<path d="M66.5 683 L66.5 676 M66.5 0 L66.5 7 M0 66.5 L7 66.5 M683 66.5 L676 66.5 M133.2 683 L133.2 676 M133.2 0 L133.2 7 M0 133.2 L7 133.2 M683 133.2 L676 133.2 M199.9 683 L199.9 676 M199.9 0 L199.9 7 M0 199.9 L7 199.9 M683 199.9 L676 199.9 M266.6 683 L266.6 676 M266.6 0 L266.6 7 M0 266.6 L7 266.6 M683 266.6 L676 266.6 M333.3 683 L333.3 676 M333.3 0 L333.3 7 M0 333.3 L7 333.3 M683 333.3 L676 333.3 M400.0 683 L400.0 676 M400.0 0 L400.0 7 M0 400.0 L7 400.0 M683 400.0 L676 400.0 M466.7 683 L466.7 676 M466.7 0 L466.7 7 M0 466.7 L7 466.7 M683 466.7 L676 466.7 M533.4 683 L533.4 676 M533.4 0 L533.4 7 M0 533.4 L7 533.4 M683 533.4 L676 533.4 M600.1 683 L600.1 676 M600.1 0 L600.1 7 M0 600.1 L7 600.1 M683 600.1 L676 600.1 M666.8 683 L666.8 676 M666.8 0 L666.8 7 M0 666.8 L7 666.8 M683 666.8 L676 666.8" stroke="#2a2a2a" stroke-width="1" fill="none"/>
</g></svg>
<div class="t tick" style="left:902.5px;width:60px;text-align:center;top:950.2px">200</div>
<div class="t tick" style="right:782.0px;top:319.3px">200</div>
<div class="t tick" style="left:969.2px;width:60px;text-align:center;top:950.2px">400</div>
<div class="t tick" style="right:782.0px;top:386.0px">400</div>
<div class="t tick" style="left:1035.9px;width:60px;text-align:center;top:950.2px">600</div>
<div class="t tick" style="right:782.0px;top:452.7px">600</div>
<div class="t tick" style="left:1102.6px;width:60px;text-align:center;top:950.2px">800</div>
<div class="t tick" style="right:782.0px;top:519.4px">800</div>
<div class="t tick" style="left:1169.3px;width:60px;text-align:center;top:950.2px">1000</div>
<div class="t tick" style="right:782.0px;top:586.1px">1000</div>
<div class="t tick" style="left:1236.0px;width:60px;text-align:center;top:950.2px">1200</div>
<div class="t tick" style="right:782.0px;top:652.8px">1200</div>
<div class="t tick" style="left:1302.7px;width:60px;text-align:center;top:950.2px">1400</div>
<div class="t tick" style="right:782.0px;top:719.5px">1400</div>
<div class="t tick" style="left:1369.4px;width:60px;text-align:center;top:950.2px">1600</div>
<div class="t tick" style="right:782.0px;top:786.2px">1600</div>
<div class="t tick" style="left:1436.1px;width:60px;text-align:center;top:950.2px">1800</div>
<div class="t tick" style="right:782.0px;top:852.9px">1800</div>
<div class="t tick" style="left:1502.8px;width:60px;text-align:center;top:950.2px">2000</div>
<div class="t tick" style="right:782.0px;top:919.6px">2000</div>
<!-- ===== Figure 2 window (top layer) ===== -->
<div class="abs" id="w5" style="left:-40px;top:35px;width:854.5px;height:520.5px;border:1px solid #1d1d1d;border-radius:7px;background:linear-gradient(#ebebeb 0,#ebebeb 480px,#f7f7f7 516px);box-shadow:0 1px 15px 3px rgba(0,0,0,.8),0 0 3px rgba(0,0,0,.55)"></div>
<div class="abs" style="left:-39px;top:36px;width:852.5px;height:28px;border-radius:6px 6px 0 0;background:linear-gradient(#9da1a8 0,#c6c8cb 4px,#dedede 9px,#e8e8e8 14px,#e4e4e4 22px,#dddddd 28px);box-shadow:inset 0 1px 0 rgba(255,255,255,.6)"></div>
<div class="abs" style="left:0;top:36px;width:280px;height:7px;background:linear-gradient(#163a63,rgba(60,80,110,0))"></div>
<div class="abs" style="left:280px;top:36px;width:92px;height:8px;background:linear-gradient(#f4f4f4,rgba(240,240,240,0))"></div>
<div class="abs" style="left:353px;top:37px;width:455px;height:26px;background:linear-gradient(90deg,rgba(255,255,255,.5),rgba(255,255,255,.35) 250px,rgba(255,255,255,.6));-webkit-mask-image:linear-gradient(rgba(0,0,0,0),#000 7px);mask-image:linear-gradient(rgba(0,0,0,0),#000 7px)"></div>
<div class="abs" style="left:362px;top:37px;width:10px;height:8px;border-radius:3px;background:#e39a6a;filter:blur(2.5px);opacity:.7"></div>
<div class="abs" style="left:380px;top:38px;width:52px;height:6px;border-radius:3px;background:#7d8796;filter:blur(3px);opacity:.7"></div>
<div class="abs" style="left:374px;top:36px;width:336px;height:7px;background:linear-gradient(#3c516b,rgba(110,125,145,0))"></div>
<div class="t" style="left:4.5px;top:43.7px;font-size:11.55px;color:#000;text-shadow:0 0 6px #fff,0 0 9px #fff">Figure 2: Line_scan,Fitting</div>
<div class="abs" style="left:360px;top:57px;width:440px;height:6px;filter:blur(3px);opacity:.55;background:linear-gradient(90deg,#d8b070 0,rgba(0,0,0,0) 14px,#d8d080 50px,rgba(0,0,0,0) 70px,#8088c0 100px,rgba(0,0,0,0) 120px,rgba(0,0,0,0) 150px,#90a8d0 175px,rgba(0,0,0,0) 195px,#90a8d0 220px,rgba(0,0,0,0) 240px,#8890b0 262px,rgba(0,0,0,0) 285px,#606880 300px,rgba(0,0,0,0) 320px,#d0b0b0 345px,rgba(0,0,0,0) 365px)"></div>
<div class="cap" style="left:705px;top:35.5px;width:103.5px;height:18.5px;border-color:#4a4d55;background:linear-gradient(#e6e8eb 0,#d6d9dd 45%,#bcc0c6 50%,#d9dbde 100%)">
 <i style="left:27.2px;width:1px;background:#6d727b"></i><i style="left:54.2px;width:1px;background:#6d727b"></i>
 <i style="left:55.2px;right:0;background:linear-gradient(#eaa99d 0,#db7763 45%,#c9452c 52%,#d75a3c 80%,#ea8c68 100%)"></i>
</div>
<div class="abs" style="left:713.7px;top:44.0px;width:12.3px;height:5.2px;background:#fff;border:1.2px solid #434a5c;border-radius:1.2px"></div>
<div class="abs" style="left:740.7px;top:39.2px;width:12.3px;height:10px;border:1.2px solid #434a5c;background:#fff;border-radius:1.5px"></div>
<div class="abs" style="left:743.6px;top:42.3px;width:6.5px;height:4px;border:1.2px solid #434a5c;background:#d3d6dc"></div>
<svg class="abs" style="left:778.2px;top:39.2px" width="13" height="10.2" viewBox="0 0 14 11" preserveAspectRatio="none"><path d="M1 0.8 L4.6 0.8 L7 3.6 L9.4 0.8 L13 0.8 L8.9 5.5 L13 10.2 L9.4 10.2 L7 7.4 L4.6 10.2 L1 10.2 L5.1 5.5Z" fill="#fff" stroke="#434a5c" stroke-width="1.15" stroke-linejoin="round"/></svg>
<div class="abs" style="left:-30px;top:63px;width:838px;height:486px;background:#f0f0f0;border:1px solid #7a7a7a"></div>
<div class="menubar" style="left:-29px;top:64px;width:835.5px;height:26px"></div>
<div class="t ui" style="left:-11px;top:71px">File</div>
<div class="t ui" style="left:26.5px;top:71px">Edit</div>
<div class="t ui" style="left:63px;top:71px">View</div>
<div class="t ui" style="left:103.5px;top:71px">Insert</div>
<div class="t ui" style="left:149.5px;top:71px">Tools</div>
<div class="t ui" style="left:194.5px;top:71px">Desktop</div>
<div class="t ui" style="left:253.5px;top:71px">Window</div>
<div class="t ui" style="left:314.5px;top:71px">Help</div>
<svg class="abs" style="left:795.3px;top:73.6px" width="7" height="6" viewBox="0 0 7 6"><path d="M0.3 1.2 L1.6 0.2 L4.6 2.6 L5.6 1.3 L7 5.6 L2.6 5 L3.6 3.8 L0.3 1.2Z" fill="#0a0a0a"/></svg>
<div class="toolbar" style="left:-29px;top:90px;width:835.5px;height:27px"></div>
<div class="abs" style="left:0;top:90px;width:420px;height:26px"><svg width="420" height="26" viewBox="0 0 420 26"><use href="#tbicons"/></svg></div>
<svg class="abs" style="left:0;top:117px" width="807" height="431" viewBox="0 117 807 431" font-family="Liberation Sans, sans-serif">
<defs><clipPath id="ca2"><rect x="91" y="398" width="637" height="94"/></clipPath></defs>
<rect x="90.5" y="194.5" width="638.0" height="95.0" fill="#fff" stroke="#262626" stroke-width="1"/>
<path d="M90.5 289.5 L90.5 283.1 M90.5 194.5 L90.5 200.9 M217.5 289.5 L217.5 283.1 M217.5 194.5 L217.5 200.9 M345.5 289.5 L345.5 283.1 M345.5 194.5 L345.5 200.9 M473.5 289.5 L473.5 283.1 M473.5 194.5 L473.5 200.9 M601.5 289.5 L601.5 283.1 M601.5 194.5 L601.5 200.9 M728.5 289.5 L728.5 283.1 M728.5 194.5 L728.5 200.9 M90.5 194.5 L96.9 194.5 M728.5 194.5 L722.1 194.5 M90.5 242.5 L96.9 242.5 M728.5 242.5 L722.1 242.5 M90.5 289.5 L96.9 289.5 M728.5 289.5 L722.1 289.5" stroke="#262626" stroke-width="1" fill="none"/>
<path d="M92.5 210.6 L93.7 212.5 L94.9 214.1 L96.1 215.5 L97.3 217.3 L98.5 217.1 L99.7 216.5 L100.9 216.7 L102.1 215.8 L103.3 217.8 L104.5 219.0 L105.7 219.4 L106.9 219.0 L108.2 217.8 L109.4 217.2 L110.6 217.4 L111.8 216.9 L113.0 218.3 L114.2 219.2 L115.4 220.2 L116.6 220.0 L117.8 219.0 L119.0 218.3 L120.2 218.7 L121.4 217.9 L122.6 218.2 L123.8 219.0 L125.0 220.1 L126.2 220.8 L127.4 220.0 L128.6 219.0 L129.8 219.0 L131.0 219.9 L132.2 221.5 L133.4 222.4 L134.6 220.9 L135.8 216.2 L137.0 220.4 L138.2 222.2 L139.5 223.5 L140.7 221.7 L141.9 219.1 L143.1 221.1 L144.3 223.2 L145.5 223.8 L146.7 223.6 L147.9 221.4 L149.1 220.9 L150.3 223.1 L151.5 225.6 L152.7 224.8 L153.9 222.7 L155.1 221.2 L156.3 222.2 L157.5 225.0 L158.7 232.9 L159.9 225.6 L161.1 223.4 L162.3 221.8 L163.5 225.9 L164.7 226.7 L165.9 229.0 L167.1 224.4 L168.3 221.4 L169.5 225.5 L170.8 229.5 L172.0 230.5 L173.2 225.9 L174.4 221.6 L175.6 222.9 L176.8 227.0 L178.0 230.1 L179.2 227.2 L180.4 224.6 L181.6 227.6 L182.8 226.3 L184.0 229.2 L185.2 228.1 L186.4 225.3 L187.6 224.4 L188.8 228.6 L190.0 229.3 L191.2 230.6 L192.4 227.5 L193.6 228.1 L194.8 225.0 L196.0 230.7 L197.2 233.2 L198.4 233.2 L199.6 229.0 L200.8 227.9 L202.1 226.2 L203.3 231.7 L204.5 233.2 L205.7 232.1 L206.9 226.9 L208.1 228.1 L209.3 231.2 L210.5 231.3 L211.7 234.3 L212.9 230.0 L214.1 226.9 L215.3 230.7 L216.5 232.2 L217.7 235.8 L218.9 231.0 L220.1 230.9 L221.3 227.9 L222.5 234.9 L223.7 236.9 L224.9 232.9 L226.1 230.0 L227.3 229.7 L228.5 231.9 L229.7 237.9 L230.9 236.4 L232.1 233.1 L233.4 232.9 L234.6 232.4 L235.8 237.4 L237.0 238.1 L238.2 235.3 L239.4 234.5 L240.6 233.7 L241.8 234.4 L243.0 238.2 L244.2 237.3 L245.4 234.6 L246.6 233.1 L247.8 237.4 L249.0 239.6 L250.2 239.9 L251.4 237.6 L252.6 234.8 L253.8 234.3 L255.0 239.2 L256.2 242.4 L257.4 239.4 L258.6 237.6 L259.8 235.4 L261.0 238.6 L262.2 240.5 L263.4 241.7 L264.7 240.1 L265.9 238.4 L267.1 236.4 L268.3 237.6 L269.5 242.1 L270.7 242.7 L271.9 243.1 L273.1 240.3 L274.3 240.5 L275.5 240.2 L276.7 241.7 L277.9 242.9 L279.1 244.3 L280.3 243.0 L281.5 241.3 L282.7 241.6 L283.9 242.6 L285.1 244.8 L286.3 245.0 L287.5 244.3 L288.7 242.6 L289.9 242.7 L291.1 243.1 L292.3 243.9 L293.5 245.1 L294.8 245.7 L296.0 244.0 L297.2 243.3 L298.4 243.4 L299.6 245.3 L300.8 246.4 L302.0 247.2 L303.2 246.1 L304.4 246.5 L305.6 245.9 L306.8 245.3 L308.0 245.6 L309.2 245.2 L310.4 247.4 L311.6 247.1 L312.8 247.7 L314.0 248.5 L315.2 248.4 L316.4 247.3 L317.6 247.5 L318.8 247.6 L320.0 248.0 L321.2 249.3 L322.4 249.6 L323.6 250.4 L324.8 250.7 L326.1 249.7 L327.3 249.3 L328.5 248.7 L329.7 248.8 L330.9 249.1 L332.1 249.6 L333.3 251.4 L334.5 251.8 L335.7 251.6 L336.9 251.7 L338.1 251.0 L339.3 250.7 L340.5 249.8 L341.7 250.5 L342.9 250.8 L344.1 252.9 L345.3 252.4 L346.5 252.7 L347.7 252.7 L348.9 252.7 L350.1 252.0 L351.3 251.7 L352.5 251.2 L353.7 253.0 L354.9 253.6 L356.1 254.1 L357.4 254.0 L358.6 254.9 L359.8 253.9 L361.0 254.2 L362.2 253.3 L363.4 253.0 L364.6 253.4 L365.8 253.9 L367.0 255.2 L368.2 256.3 L369.4 256.8 L370.6 256.0 L371.8 255.1 L373.0 255.1 L374.2 254.3 L375.4 254.8 L376.6 256.2 L377.8 256.8 L379.0 257.2 L380.2 256.8 L381.4 257.1 L382.6 256.7 L383.8 256.2 L385.0 256.4 L386.2 256.5 L387.4 256.8 L388.7 258.4 L389.9 258.3 L391.1 258.9 L392.3 258.3 L393.5 257.8 L394.7 257.3 L395.9 256.9 L397.1 258.0 L398.3 259.0 L399.5 258.9 L400.7 259.7 L401.9 260.2 L403.1 260.5 L404.3 259.7 L405.5 258.8 L406.7 259.3 L407.9 258.8 L409.1 260.2 L410.3 261.0 L411.5 261.3 L412.7 261.1 L413.9 261.1 L415.1 260.3 L416.3 259.9 L417.5 259.8 L418.7 260.1 L420.0 260.6 L421.2 261.4 L422.4 262.1 L423.6 262.4 L424.8 262.0 L426.0 261.7 L427.2 260.3 L428.4 260.4 L429.6 261.2 L430.8 261.8 L432.0 263.7 L433.2 262.4 L434.4 262.8 L435.6 260.1 L436.8 261.2 L438.0 262.1 L439.2 263.7 L440.4 263.6 L441.6 261.3 L442.8 260.7 L444.0 261.9 L445.2 262.5 L446.4 264.5 L447.6 263.3 L448.8 262.1 L450.1 261.2 L451.3 262.0 L452.5 264.8 L453.7 265.2 L454.9 264.8 L456.1 263.1 L457.3 261.9 L458.5 262.8 L459.7 265.0 L460.9 266.0 L462.1 265.0 L463.3 263.5 L464.5 262.4 L465.7 263.1 L466.9 265.4 L468.1 265.4 L469.3 265.2 L470.5 262.7 L471.7 264.2 L472.9 265.8 L474.1 266.0 L475.3 265.7 L476.5 264.7 L477.7 264.4 L478.9 263.3 L480.1 266.4 L481.4 267.0 L482.6 265.7 L483.8 264.4 L485.0 264.5 L486.2 264.6 L487.4 265.8 L488.6 266.7 L489.8 266.3 L491.0 264.6 L492.2 264.8 L493.4 264.9 L494.6 266.2 L495.8 267.7 L497.0 267.0 L498.2 265.7 L499.4 264.8 L500.6 265.7 L501.8 268.1 L503.0 268.7 L504.2 268.8 L505.4 268.4 L506.6 267.5 L507.8 266.4 L509.0 268.1 L510.2 270.0 L511.4 269.7 L512.7 268.9 L513.9 267.1 L515.1 267.4 L516.3 268.8 L517.5 269.2 L518.7 269.1 L519.9 267.8 L521.1 267.2 L522.3 268.4 L523.5 270.2 L524.7 270.2 L525.9 269.4 L527.1 268.0 L528.3 267.0 L529.5 269.2 L530.7 270.3 L531.9 270.6 L533.1 268.9 L534.3 268.8 L535.5 268.9 L536.7 269.4 L537.9 270.2 L539.1 270.9 L540.3 270.8 L541.5 269.5 L542.7 268.0 L544.0 269.8 L545.2 271.1 L546.4 272.2 L547.6 269.8 L548.8 269.5 L550.0 268.6 L551.2 270.6 L552.4 270.6 L553.6 272.1 L554.8 270.9 L556.0 270.0 L557.2 268.8 L558.4 270.4 L559.6 271.6 L560.8 271.6 L562.0 271.3 L563.2 270.0 L564.4 269.6 L565.6 269.4 L566.8 268.5 L568.0 270.5 L569.2 271.9 L570.4 270.3 L571.6 270.5 L572.8 271.3 L574.0 272.1 L575.3 272.5 L576.5 272.2 L577.7 271.6 L578.9 270.7 L580.1 270.1 L581.3 272.6 L582.5 273.5 L583.7 273.1 L584.9 271.5 L586.1 271.3 L587.3 270.5 L588.5 272.3 L589.7 273.2 L590.9 273.6 L592.1 272.5 L593.3 270.8 L594.5 272.1 L595.7 273.2 L596.9 273.3 L598.1 274.4 L599.3 272.5 L600.5 271.3 L601.7 270.9 L602.9 272.6 L604.1 274.6 L605.3 273.5 L606.6 273.4 L607.8 272.6 L609.0 271.5 L610.2 273.9 L611.4 275.6 L612.6 275.5 L613.8 274.5 L615.0 272.8 L616.2 272.7 L617.4 273.7 L618.6 275.1 L619.8 276.0 L621.0 275.0" fill="none" stroke="#0072bd" stroke-width="1" stroke-linejoin="round"/>
<rect x="90.5" y="397.5" width="638.0" height="94.80000000000001" fill="#fff" stroke="#262626" stroke-width="1"/>
<path d="M96.5 492.3 L96.5 485.90000000000003 M96.5 397.5 L96.5 403.9 M199.5 492.3 L199.5 485.90000000000003 M199.5 397.5 L199.5 403.9 M302.5 492.3 L302.5 485.90000000000003 M302.5 397.5 L302.5 403.9 M405.5 492.3 L405.5 485.90000000000003 M405.5 397.5 L405.5 403.9 M508.5 492.3 L508.5 485.90000000000003 M508.5 397.5 L508.5 403.9 M611.5 492.3 L611.5 485.90000000000003 M611.5 397.5 L611.5 403.9 M714.5 492.3 L714.5 485.90000000000003 M714.5 397.5 L714.5 403.9 M90.5 397.5 L96.9 397.5 M728.5 397.5 L722.1 397.5 M90.5 444.5 L96.9 444.5 M728.5 444.5 L722.1 444.5 M90.5 490.5 L96.9 490.5 M728.5 490.5 L722.1 490.5" stroke="#262626" stroke-width="1" fill="none"/>
<path d="M89.9 347.1 L93.9 349.2 L97.9 351.2 L101.9 353.1 L105.9 355.1 L109.9 357.1 L113.8 359.0 L117.8 360.9 L121.8 362.8 L125.8 364.7 L129.8 366.5 L133.8 368.4 L137.8 370.2 L141.8 372.0 L145.8 373.8 L149.8 375.5 L153.8 377.3 L157.8 379.0 L161.7 380.7 L165.7 382.4 L169.7 384.1 L173.7 385.7 L177.7 387.4 L181.7 389.0 L185.7 390.6 L189.7 392.2 L193.7 393.7 L197.7 395.3 L201.7 396.8 L205.6 398.3 L209.6 399.8 L213.6 401.2 L217.6 402.7 L221.6 404.1 L225.6 405.5 L229.6 406.9 L233.6 408.3 L237.6 409.7 L241.6 411.0 L245.6 412.3 L249.6 413.6 L253.5 414.9 L257.5 416.2 L261.5 417.4 L265.5 418.6 L269.5 419.8 L273.5 421.0 L277.5 422.2 L281.5 423.4 L285.5 424.5 L289.5 425.6 L293.5 426.7 L297.4 427.8 L301.4 428.8 L305.4 429.9 L309.4 430.9 L313.4 431.9 L317.4 432.9 L321.4 433.9 L325.4 434.8 L329.4 435.7 L333.4 436.7 L337.4 437.6 L341.4 438.4 L345.3 439.3 L349.3 440.1 L353.3 440.9 L357.3 441.7 L361.3 442.5 L365.3 443.3 L369.3 444.0 L373.3 444.8 L377.3 445.5 L381.3 446.2 L385.3 446.8 L389.2 447.5 L393.2 448.1 L397.2 448.7 L401.2 449.3 L405.2 449.9 L409.2 450.5 L413.2 451.0 L417.2 451.6 L421.2 452.1 L425.2 452.5 L429.2 453.0 L433.1 453.5 L437.1 453.9 L441.1 454.3 L445.1 454.7 L449.1 455.1 L453.1 455.4 L457.1 455.8 L461.1 456.1 L465.1 456.4 L469.1 456.7 L473.1 456.9 L477.1 457.2 L481.0 457.4 L485.0 457.6 L489.0 457.8 L493.0 458.0 L497.0 458.1 L501.0 458.3 L505.0 458.4 L509.0 458.5 L513.0 458.6 L517.0 458.6 L521.0 458.7 L524.9 458.7 L528.9 458.7 L532.9 458.7 L536.9 458.7 L540.9 458.6 L544.9 458.6 L548.9 458.5 L552.9 458.4 L556.9 458.2 L560.9 458.1 L564.9 457.9 L568.9 457.8 L572.8 457.6 L576.8 457.3 L580.8 457.1 L584.8 456.9 L588.8 456.6 L592.8 456.3 L596.8 456.0 L600.8 455.7 L604.8 455.3 L608.8 455.0 L612.8 454.6 L616.7 454.2 L620.7 453.8 L624.7 453.3 L628.7 452.9 L632.7 452.4 L636.7 451.9 L640.7 451.4 L644.7 450.8 L648.7 450.3 L652.7 449.7 L656.7 449.1 L660.7 448.5 L664.6 447.9 L668.6 447.3 L672.6 446.6 L676.6 445.9 L680.6 445.2 L684.6 444.5 L688.6 443.8 L692.6 443.0 L696.6 442.3 L700.6 441.5 L704.6 440.7 L708.5 439.8 L712.5 439.0 L716.5 438.1 L720.5 437.3 L724.5 436.4 L728.5 435.4" fill="none" stroke="#0072bd" stroke-width="1" clip-path="url(#ca2)"/>
<path d="M300.0 424.0l5.4 5.4m0-5.4l-5.4 5.4M300.5 429.5l5.4 5.4m0-5.4l-5.4 5.4M301.0 427.8l5.4 5.4m0-5.4l-5.4 5.4M301.5 425.2l5.4 5.4m0-5.4l-5.4 5.4M302.0 429.3l5.4 5.4m0-5.4l-5.4 5.4M302.6 427.9l5.4 5.4m0-5.4l-5.4 5.4M303.1 429.4l5.4 5.4m0-5.4l-5.4 5.4M303.6 425.3l5.4 5.4m0-5.4l-5.4 5.4M304.1 425.8l5.4 5.4m0-5.4l-5.4 5.4M304.6 425.7l5.4 5.4m0-5.4l-5.4 5.4M305.1 429.9l5.4 5.4m0-5.4l-5.4 5.4M305.6 428.3l5.4 5.4m0-5.4l-5.4 5.4M306.1 428.6l5.4 5.4m0-5.4l-5.4 5.4M306.6 427.1l5.4 5.4m0-5.4l-5.4 5.4M307.1 430.0l5.4 5.4m0-5.4l-5.4 5.4M307.7 428.8l5.4 5.4m0-5.4l-5.4 5.4M308.2 429.9l5.4 5.4m0-5.4l-5.4 5.4M308.7 427.1l5.4 5.4m0-5.4l-5.4 5.4M309.2 429.2l5.4 5.4m0-5.4l-5.4 5.4M309.7 428.7l5.4 5.4m0-5.4l-5.4 5.4M310.2 430.3l5.4 5.4m0-5.4l-5.4 5.4M310.7 427.3l5.4 5.4m0-5.4l-5.4 5.4M311.2 429.5l5.4 5.4m0-5.4l-5.4 5.4M311.7 427.3l5.4 5.4m0-5.4l-5.4 5.4M312.2 432.8l5.4 5.4m0-5.4l-5.4 5.4M312.8 429.2l5.4 5.4m0-5.4l-5.4 5.4M313.3 429.1l5.4 5.4m0-5.4l-5.4 5.4M313.8 430.2l5.4 5.4m0-5.4l-5.4 5.4M314.3 431.5l5.4 5.4m0-5.4l-5.4 5.4M314.8 431.0l5.4 5.4m0-5.4l-5.4 5.4M315.3 430.2l5.4 5.4m0-5.4l-5.4 5.4M315.8 427.5l5.4 5.4m0-5.4l-5.4 5.4M316.3 428.6l5.4 5.4m0-5.4l-5.4 5.4M316.8 428.8l5.4 5.4m0-5.4l-5.4 5.4M317.3 433.1l5.4 5.4m0-5.4l-5.4 5.4M317.9 432.5l5.4 5.4m0-5.4l-5.4 5.4M318.4 430.2l5.4 5.4m0-5.4l-5.4 5.4M318.9 428.8l5.4 5.4m0-5.4l-5.4 5.4M319.4 431.0l5.4 5.4m0-5.4l-5.4 5.4M319.9 434.0l5.4 5.4m0-5.4l-5.4 5.4M320.4 429.4l5.4 5.4m0-5.4l-5.4 5.4M320.9 429.5l5.4 5.4m0-5.4l-5.4 5.4M321.4 433.2l5.4 5.4m0-5.4l-5.4 5.4M321.9 430.3l5.4 5.4m0-5.4l-5.4 5.4M322.4 433.5l5.4 5.4m0-5.4l-5.4 5.4M323.0 429.6l5.4 5.4m0-5.4l-5.4 5.4M323.5 434.5l5.4 5.4m0-5.4l-5.4 5.4M324.0 432.8l5.4 5.4m0-5.4l-5.4 5.4M324.5 429.7l5.4 5.4m0-5.4l-5.4 5.4M325.0 434.4l5.4 5.4m0-5.4l-5.4 5.4M325.5 433.1l5.4 5.4m0-5.4l-5.4 5.4M326.0 433.8l5.4 5.4m0-5.4l-5.4 5.4M326.5 436.0l5.4 5.4m0-5.4l-5.4 5.4M327.0 436.0l5.4 5.4m0-5.4l-5.4 5.4M327.5 433.2l5.4 5.4m0-5.4l-5.4 5.4M328.1 435.0l5.4 5.4m0-5.4l-5.4 5.4M328.6 430.4l5.4 5.4m0-5.4l-5.4 5.4M329.1 434.4l5.4 5.4m0-5.4l-5.4 5.4M329.6 436.7l5.4 5.4m0-5.4l-5.4 5.4M330.1 431.1l5.4 5.4m0-5.4l-5.4 5.4M330.6 431.8l5.4 5.4m0-5.4l-5.4 5.4M331.1 433.1l5.4 5.4m0-5.4l-5.4 5.4M331.6 432.3l5.4 5.4m0-5.4l-5.4 5.4M332.1 436.6l5.4 5.4m0-5.4l-5.4 5.4M332.6 435.8l5.4 5.4m0-5.4l-5.4 5.4M333.2 432.4l5.4 5.4m0-5.4l-5.4 5.4M333.7 433.4l5.4 5.4m0-5.4l-5.4 5.4M334.2 437.0l5.4 5.4m0-5.4l-5.4 5.4M334.7 433.6l5.4 5.4m0-5.4l-5.4 5.4M335.2 435.3l5.4 5.4m0-5.4l-5.4 5.4M335.7 438.2l5.4 5.4m0-5.4l-5.4 5.4M336.2 437.9l5.4 5.4m0-5.4l-5.4 5.4M336.7 436.9l5.4 5.4m0-5.4l-5.4 5.4M337.2 433.3l5.4 5.4m0-5.4l-5.4 5.4M337.7 435.2l5.4 5.4m0-5.4l-5.4 5.4M338.3 434.2l5.4 5.4m0-5.4l-5.4 5.4M338.8 435.6l5.4 5.4m0-5.4l-5.4 5.4M339.3 438.3l5.4 5.4m0-5.4l-5.4 5.4M339.8 437.3l5.4 5.4m0-5.4l-5.4 5.4M340.3 437.3l5.4 5.4m0-5.4l-5.4 5.4M340.8 439.1l5.4 5.4m0-5.4l-5.4 5.4M341.3 436.8l5.4 5.4m0-5.4l-5.4 5.4M341.8 434.6l5.4 5.4m0-5.4l-5.4 5.4M342.3 436.8l5.4 5.4m0-5.4l-5.4 5.4M342.8 439.1l5.4 5.4m0-5.4l-5.4 5.4M343.4 434.2l5.4 5.4m0-5.4l-5.4 5.4M343.9 436.2l5.4 5.4m0-5.4l-5.4 5.4M344.4 440.0l5.4 5.4m0-5.4l-5.4 5.4M344.9 437.0l5.4 5.4m0-5.4l-5.4 5.4M345.4 438.8l5.4 5.4m0-5.4l-5.4 5.4M345.9 439.5l5.4 5.4m0-5.4l-5.4 5.4M346.4 437.8l5.4 5.4m0-5.4l-5.4 5.4M346.9 436.8l5.4 5.4m0-5.4l-5.4 5.4M347.4 439.2l5.4 5.4m0-5.4l-5.4 5.4M347.9 438.2l5.4 5.4m0-5.4l-5.4 5.4M348.5 436.8l5.4 5.4m0-5.4l-5.4 5.4M349.0 440.5l5.4 5.4m0-5.4l-5.4 5.4M349.5 435.0l5.4 5.4m0-5.4l-5.4 5.4M350.0 440.8l5.4 5.4m0-5.4l-5.4 5.4M350.5 438.1l5.4 5.4m0-5.4l-5.4 5.4M351.0 438.3l5.4 5.4m0-5.4l-5.4 5.4M351.5 435.3l5.4 5.4m0-5.4l-5.4 5.4M352.0 438.2l5.4 5.4m0-5.4l-5.4 5.4M352.5 439.3l5.4 5.4m0-5.4l-5.4 5.4M353.0 438.9l5.4 5.4m0-5.4l-5.4 5.4M353.6 438.0l5.4 5.4m0-5.4l-5.4 5.4M354.1 435.9l5.4 5.4m0-5.4l-5.4 5.4M354.6 440.6l5.4 5.4m0-5.4l-5.4 5.4M355.1 442.2l5.4 5.4m0-5.4l-5.4 5.4M355.6 437.4l5.4 5.4m0-5.4l-5.4 5.4M356.1 440.3l5.4 5.4m0-5.4l-5.4 5.4M356.6 438.0l5.4 5.4m0-5.4l-5.4 5.4M357.1 438.7l5.4 5.4m0-5.4l-5.4 5.4M357.6 437.9l5.4 5.4m0-5.4l-5.4 5.4M358.1 438.3l5.4 5.4m0-5.4l-5.4 5.4M358.7 440.9l5.4 5.4m0-5.4l-5.4 5.4M359.2 442.8l5.4 5.4m0-5.4l-5.4 5.4M359.7 439.7l5.4 5.4m0-5.4l-5.4 5.4M360.2 438.2l5.4 5.4m0-5.4l-5.4 5.4M360.7 442.3l5.4 5.4m0-5.4l-5.4 5.4M361.2 438.6l5.4 5.4m0-5.4l-5.4 5.4M361.7 440.7l5.4 5.4m0-5.4l-5.4 5.4M362.2 439.3l5.4 5.4m0-5.4l-5.4 5.4M362.7 439.8l5.4 5.4m0-5.4l-5.4 5.4M363.3 438.7l5.4 5.4m0-5.4l-5.4 5.4M363.8 443.6l5.4 5.4m0-5.4l-5.4 5.4M364.3 439.2l5.4 5.4m0-5.4l-5.4 5.4M364.8 441.3l5.4 5.4m0-5.4l-5.4 5.4M365.3 442.4l5.4 5.4m0-5.4l-5.4 5.4M365.8 444.1l5.4 5.4m0-5.4l-5.4 5.4M366.3 443.2l5.4 5.4m0-5.4l-5.4 5.4M366.8 444.3l5.4 5.4m0-5.4l-5.4 5.4M367.3 438.7l5.4 5.4m0-5.4l-5.4 5.4M367.8 441.5l5.4 5.4m0-5.4l-5.4 5.4M368.4 438.6l5.4 5.4m0-5.4l-5.4 5.4M368.9 441.5l5.4 5.4m0-5.4l-5.4 5.4M369.4 443.4l5.4 5.4m0-5.4l-5.4 5.4M369.9 440.3l5.4 5.4m0-5.4l-5.4 5.4M370.4 444.0l5.4 5.4m0-5.4l-5.4 5.4M370.9 443.0l5.4 5.4m0-5.4l-5.4 5.4M371.4 440.4l5.4 5.4m0-5.4l-5.4 5.4M371.9 440.0l5.4 5.4m0-5.4l-5.4 5.4M372.4 443.5l5.4 5.4m0-5.4l-5.4 5.4M372.9 444.9l5.4 5.4m0-5.4l-5.4 5.4M373.5 443.4l5.4 5.4m0-5.4l-5.4 5.4M374.0 440.2l5.4 5.4m0-5.4l-5.4 5.4M374.5 441.2l5.4 5.4m0-5.4l-5.4 5.4M375.0 440.4l5.4 5.4m0-5.4l-5.4 5.4M375.5 443.7l5.4 5.4m0-5.4l-5.4 5.4M376.0 440.0l5.4 5.4m0-5.4l-5.4 5.4M376.5 443.1l5.4 5.4m0-5.4l-5.4 5.4M377.0 443.2l5.4 5.4m0-5.4l-5.4 5.4M377.5 440.6l5.4 5.4m0-5.4l-5.4 5.4M378.0 443.3l5.4 5.4m0-5.4l-5.4 5.4M378.6 441.6l5.4 5.4m0-5.4l-5.4 5.4M379.1 442.1l5.4 5.4m0-5.4l-5.4 5.4M379.6 446.3l5.4 5.4m0-5.4l-5.4 5.4M380.1 443.1l5.4 5.4m0-5.4l-5.4 5.4M380.6 441.8l5.4 5.4m0-5.4l-5.4 5.4M381.1 443.6l5.4 5.4m0-5.4l-5.4 5.4M381.6 445.1l5.4 5.4m0-5.4l-5.4 5.4M382.1 446.7l5.4 5.4m0-5.4l-5.4 5.4M382.6 443.1l5.4 5.4m0-5.4l-5.4 5.4M383.1 445.5l5.4 5.4m0-5.4l-5.4 5.4M383.7 443.7l5.4 5.4m0-5.4l-5.4 5.4M384.2 444.9l5.4 5.4m0-5.4l-5.4 5.4M384.7 443.3l5.4 5.4m0-5.4l-5.4 5.4M385.2 445.5l5.4 5.4m0-5.4l-5.4 5.4M385.7 447.5l5.4 5.4m0-5.4l-5.4 5.4M386.2 442.4l5.4 5.4m0-5.4l-5.4 5.4M386.7 445.8l5.4 5.4m0-5.4l-5.4 5.4M387.2 441.8l5.4 5.4m0-5.4l-5.4 5.4M387.7 446.4l5.4 5.4m0-5.4l-5.4 5.4M388.2 442.0l5.4 5.4m0-5.4l-5.4 5.4M388.8 442.3l5.4 5.4m0-5.4l-5.4 5.4M389.3 447.9l5.4 5.4m0-5.4l-5.4 5.4M389.8 444.4l5.4 5.4m0-5.4l-5.4 5.4M390.3 446.3l5.4 5.4m0-5.4l-5.4 5.4M390.8 443.6l5.4 5.4m0-5.4l-5.4 5.4M391.3 444.4l5.4 5.4m0-5.4l-5.4 5.4M391.8 442.8l5.4 5.4m0-5.4l-5.4 5.4M392.3 448.0l5.4 5.4m0-5.4l-5.4 5.4M392.8 445.1l5.4 5.4m0-5.4l-5.4 5.4M393.3 444.1l5.4 5.4m0-5.4l-5.4 5.4M393.9 448.9l5.4 5.4m0-5.4l-5.4 5.4M394.4 448.8l5.4 5.4m0-5.4l-5.4 5.4M394.9 444.3l5.4 5.4m0-5.4l-5.4 5.4M395.4 447.0l5.4 5.4m0-5.4l-5.4 5.4M395.9 447.0l5.4 5.4m0-5.4l-5.4 5.4M396.4 445.9l5.4 5.4m0-5.4l-5.4 5.4M396.9 445.7l5.4 5.4m0-5.4l-5.4 5.4M397.4 445.3l5.4 5.4m0-5.4l-5.4 5.4M397.9 443.7l5.4 5.4m0-5.4l-5.4 5.4M398.4 447.4l5.4 5.4m0-5.4l-5.4 5.4M399.0 445.0l5.4 5.4m0-5.4l-5.4 5.4M399.5 446.3l5.4 5.4m0-5.4l-5.4 5.4M400.0 446.7l5.4 5.4m0-5.4l-5.4 5.4M400.5 447.6l5.4 5.4m0-5.4l-5.4 5.4M401.0 446.1l5.4 5.4m0-5.4l-5.4 5.4M401.5 448.7l5.4 5.4m0-5.4l-5.4 5.4M402.0 449.6l5.4 5.4m0-5.4l-5.4 5.4M402.5 445.7l5.4 5.4m0-5.4l-5.4 5.4M403.0 447.3l5.4 5.4m0-5.4l-5.4 5.4M403.5 448.1l5.4 5.4m0-5.4l-5.4 5.4M404.1 447.1l5.4 5.4m0-5.4l-5.4 5.4M404.6 449.0l5.4 5.4m0-5.4l-5.4 5.4M405.1 449.1l5.4 5.4m0-5.4l-5.4 5.4M405.6 448.0l5.4 5.4m0-5.4l-5.4 5.4M406.1 444.6l5.4 5.4m0-5.4l-5.4 5.4M406.6 449.2l5.4 5.4m0-5.4l-5.4 5.4M407.1 445.2l5.4 5.4m0-5.4l-5.4 5.4M407.6 448.0l5.4 5.4m0-5.4l-5.4 5.4M408.1 450.4l5.4 5.4m0-5.4l-5.4 5.4M408.6 445.8l5.4 5.4m0-5.4l-5.4 5.4M409.2 448.4l5.4 5.4m0-5.4l-5.4 5.4M409.7 445.7l5.4 5.4m0-5.4l-5.4 5.4M410.2 448.6l5.4 5.4m0-5.4l-5.4 5.4M410.7 451.0l5.4 5.4m0-5.4l-5.4 5.4M411.2 447.3l5.4 5.4m0-5.4l-5.4 5.4M411.7 446.3l5.4 5.4m0-5.4l-5.4 5.4M412.2 449.7l5.4 5.4m0-5.4l-5.4 5.4M412.7 449.6l5.4 5.4m0-5.4l-5.4 5.4M413.2 451.4l5.4 5.4m0-5.4l-5.4 5.4M413.7 448.5l5.4 5.4m0-5.4l-5.4 5.4M414.3 446.3l5.4 5.4m0-5.4l-5.4 5.4M414.8 446.7l5.4 5.4m0-5.4l-5.4 5.4M415.3 447.6l5.4 5.4m0-5.4l-5.4 5.4M415.8 446.3l5.4 5.4m0-5.4l-5.4 5.4M416.3 448.2l5.4 5.4m0-5.4l-5.4 5.4M416.8 447.3l5.4 5.4m0-5.4l-5.4 5.4M417.3 449.2l5.4 5.4m0-5.4l-5.4 5.4M417.8 451.7l5.4 5.4m0-5.4l-5.4 5.4M418.3 451.2l5.4 5.4m0-5.4l-5.4 5.4M418.8 451.7l5.4 5.4m0-5.4l-5.4 5.4M419.4 447.6l5.4 5.4m0-5.4l-5.4 5.4M419.9 452.5l5.4 5.4m0-5.4l-5.4 5.4M420.4 449.2l5.4 5.4m0-5.4l-5.4 5.4M420.9 450.5l5.4 5.4m0-5.4l-5.4 5.4M421.4 447.8l5.4 5.4m0-5.4l-5.4 5.4M421.9 449.4l5.4 5.4m0-5.4l-5.4 5.4M422.4 449.1l5.4 5.4m0-5.4l-5.4 5.4M422.9 452.5l5.4 5.4m0-5.4l-5.4 5.4M423.4 451.2l5.4 5.4m0-5.4l-5.4 5.4M424.0 447.8l5.4 5.4m0-5.4l-5.4 5.4M424.5 449.1l5.4 5.4m0-5.4l-5.4 5.4M425.0 450.0l5.4 5.4m0-5.4l-5.4 5.4M425.5 449.0l5.4 5.4m0-5.4l-5.4 5.4M426.0 448.8l5.4 5.4m0-5.4l-5.4 5.4M426.5 452.2l5.4 5.4m0-5.4l-5.4 5.4M427.0 448.3l5.4 5.4m0-5.4l-5.4 5.4M427.5 449.8l5.4 5.4m0-5.4l-5.4 5.4M428.0 450.7l5.4 5.4m0-5.4l-5.4 5.4M428.5 449.7l5.4 5.4m0-5.4l-5.4 5.4M429.1 451.3l5.4 5.4m0-5.4l-5.4 5.4M429.6 449.0l5.4 5.4m0-5.4l-5.4 5.4M430.1 449.5l5.4 5.4m0-5.4l-5.4 5.4M430.6 450.2l5.4 5.4m0-5.4l-5.4 5.4M431.1 452.3l5.4 5.4m0-5.4l-5.4 5.4M431.6 448.8l5.4 5.4m0-5.4l-5.4 5.4M432.1 451.2l5.4 5.4m0-5.4l-5.4 5.4M432.6 449.2l5.4 5.4m0-5.4l-5.4 5.4M433.1 453.0l5.4 5.4m0-5.4l-5.4 5.4M433.6 452.8l5.4 5.4m0-5.4l-5.4 5.4M434.2 452.7l5.4 5.4m0-5.4l-5.4 5.4M434.7 452.7l5.4 5.4m0-5.4l-5.4 5.4M435.2 452.1l5.4 5.4m0-5.4l-5.4 5.4M435.7 450.4l5.4 5.4m0-5.4l-5.4 5.4M436.2 452.1l5.4 5.4m0-5.4l-5.4 5.4M436.7 449.5l5.4 5.4m0-5.4l-5.4 5.4M437.2 449.7l5.4 5.4m0-5.4l-5.4 5.4M437.7 450.0l5.4 5.4m0-5.4l-5.4 5.4M438.2 452.7l5.4 5.4m0-5.4l-5.4 5.4M438.7 451.0l5.4 5.4m0-5.4l-5.4 5.4M439.3 451.5l5.4 5.4m0-5.4l-5.4 5.4M439.8 453.4l5.4 5.4m0-5.4l-5.4 5.4M440.3 452.7l5.4 5.4m0-5.4l-5.4 5.4M440.8 451.7l5.4 5.4m0-5.4l-5.4 5.4M441.3 451.9l5.4 5.4m0-5.4l-5.4 5.4M441.8 453.4l5.4 5.4m0-5.4l-5.4 5.4M442.3 450.0l5.4 5.4m0-5.4l-5.4 5.4M442.8 453.6l5.4 5.4m0-5.4l-5.4 5.4M443.3 451.4l5.4 5.4m0-5.4l-5.4 5.4M443.8 451.2l5.4 5.4m0-5.4l-5.4 5.4M444.4 451.7l5.4 5.4m0-5.4l-5.4 5.4M444.9 450.7l5.4 5.4m0-5.4l-5.4 5.4M445.4 452.0l5.4 5.4m0-5.4l-5.4 5.4M445.9 450.9l5.4 5.4m0-5.4l-5.4 5.4M446.4 454.5l5.4 5.4m0-5.4l-5.4 5.4M446.9 454.5l5.4 5.4m0-5.4l-5.4 5.4M447.4 451.8l5.4 5.4m0-5.4l-5.4 5.4M447.9 452.2l5.4 5.4m0-5.4l-5.4 5.4M448.4 451.9l5.4 5.4m0-5.4l-5.4 5.4M448.9 451.4l5.4 5.4m0-5.4l-5.4 5.4M449.5 453.0l5.4 5.4m0-5.4l-5.4 5.4M450.0 452.1l5.4 5.4m0-5.4l-5.4 5.4M450.5 452.7l5.4 5.4m0-5.4l-5.4 5.4M451.0 452.2l5.4 5.4m0-5.4l-5.4 5.4M451.5 453.8l5.4 5.4m0-5.4l-5.4 5.4M452.0 450.8l5.4 5.4m0-5.4l-5.4 5.4M452.5 453.0l5.4 5.4m0-5.4l-5.4 5.4M453.0 451.6l5.4 5.4m0-5.4l-5.4 5.4M453.5 452.2l5.4 5.4m0-5.4l-5.4 5.4M454.0 453.9l5.4 5.4m0-5.4l-5.4 5.4M454.6 455.0l5.4 5.4m0-5.4l-5.4 5.4M455.1 455.1l5.4 5.4m0-5.4l-5.4 5.4M455.6 453.4l5.4 5.4m0-5.4l-5.4 5.4M456.1 453.3l5.4 5.4m0-5.4l-5.4 5.4M456.6 454.6l5.4 5.4m0-5.4l-5.4 5.4M457.1 452.8l5.4 5.4m0-5.4l-5.4 5.4M457.6 454.2l5.4 5.4m0-5.4l-5.4 5.4M458.1 452.4l5.4 5.4m0-5.4l-5.4 5.4M458.6 452.4l5.4 5.4m0-5.4l-5.4 5.4M459.1 451.8l5.4 5.4m0-5.4l-5.4 5.4M459.7 451.4l5.4 5.4m0-5.4l-5.4 5.4M460.2 455.2l5.4 5.4m0-5.4l-5.4 5.4M460.7 454.1l5.4 5.4m0-5.4l-5.4 5.4M461.2 453.3l5.4 5.4m0-5.4l-5.4 5.4M461.7 454.5l5.4 5.4m0-5.4l-5.4 5.4M462.2 453.8l5.4 5.4m0-5.4l-5.4 5.4M462.7 454.8l5.4 5.4m0-5.4l-5.4 5.4M463.2 454.9l5.4 5.4m0-5.4l-5.4 5.4M463.7 455.6l5.4 5.4m0-5.4l-5.4 5.4M464.2 454.8l5.4 5.4m0-5.4l-5.4 5.4M464.8 454.4l5.4 5.4m0-5.4l-5.4 5.4M465.3 453.4l5.4 5.4m0-5.4l-5.4 5.4M465.8 455.1l5.4 5.4m0-5.4l-5.4 5.4M466.3 452.3l5.4 5.4m0-5.4l-5.4 5.4M466.8 455.5l5.4 5.4m0-5.4l-5.4 5.4M467.3 454.8l5.4 5.4m0-5.4l-5.4 5.4M467.8 453.7l5.4 5.4m0-5.4l-5.4 5.4M468.3 454.9l5.4 5.4m0-5.4l-5.4 5.4M468.8 453.0l5.4 5.4m0-5.4l-5.4 5.4M469.3 454.2l5.4 5.4m0-5.4l-5.4 5.4M469.9 454.1l5.4 5.4m0-5.4l-5.4 5.4M470.4 454.3l5.4 5.4m0-5.4l-5.4 5.4M470.9 455.1l5.4 5.4m0-5.4l-5.4 5.4M471.4 456.4l5.4 5.4m0-5.4l-5.4 5.4M471.9 452.4l5.4 5.4m0-5.4l-5.4 5.4M472.4 454.3l5.4 5.4m0-5.4l-5.4 5.4M472.9 452.3l5.4 5.4m0-5.4l-5.4 5.4M473.4 455.7l5.4 5.4m0-5.4l-5.4 5.4M473.9 455.1l5.4 5.4m0-5.4l-5.4 5.4M474.4 456.5l5.4 5.4m0-5.4l-5.4 5.4M475.0 454.6l5.4 5.4m0-5.4l-5.4 5.4M475.5 452.9l5.4 5.4m0-5.4l-5.4 5.4M476.0 453.9l5.4 5.4m0-5.4l-5.4 5.4M476.5 454.7l5.4 5.4m0-5.4l-5.4 5.4M477.0 454.5l5.4 5.4m0-5.4l-5.4 5.4M477.5 453.1l5.4 5.4m0-5.4l-5.4 5.4M478.0 455.0l5.4 5.4m0-5.4l-5.4 5.4M478.5 453.0l5.4 5.4m0-5.4l-5.4 5.4M479.0 453.7l5.4 5.4m0-5.4l-5.4 5.4M479.5 453.6l5.4 5.4m0-5.4l-5.4 5.4M480.1 455.4l5.4 5.4m0-5.4l-5.4 5.4M480.6 455.3l5.4 5.4m0-5.4l-5.4 5.4M481.1 454.6l5.4 5.4m0-5.4l-5.4 5.4M481.6 456.3l5.4 5.4m0-5.4l-5.4 5.4M482.1 454.7l5.4 5.4m0-5.4l-5.4 5.4M482.6 456.8l5.4 5.4m0-5.4l-5.4 5.4M483.1 454.9l5.4 5.4m0-5.4l-5.4 5.4M483.6 453.8l5.4 5.4m0-5.4l-5.4 5.4M484.1 456.0l5.4 5.4m0-5.4l-5.4 5.4M484.7 452.9l5.4 5.4m0-5.4l-5.4 5.4M485.2 454.3l5.4 5.4m0-5.4l-5.4 5.4M485.7 456.8l5.4 5.4m0-5.4l-5.4 5.4M486.2 453.0l5.4 5.4m0-5.4l-5.4 5.4M486.7 455.6l5.4 5.4m0-5.4l-5.4 5.4M487.2 453.8l5.4 5.4m0-5.4l-5.4 5.4M487.7 455.9l5.4 5.4m0-5.4l-5.4 5.4M488.2 453.2l5.4 5.4m0-5.4l-5.4 5.4M488.7 454.1l5.4 5.4m0-5.4l-5.4 5.4M489.2 456.6l5.4 5.4m0-5.4l-5.4 5.4M489.8 455.2l5.4 5.4m0-5.4l-5.4 5.4M490.3 455.3l5.4 5.4m0-5.4l-5.4 5.4M490.8 457.3l5.4 5.4m0-5.4l-5.4 5.4M491.3 457.0l5.4 5.4m0-5.4l-5.4 5.4M491.8 456.1l5.4 5.4m0-5.4l-5.4 5.4M492.3 455.5l5.4 5.4m0-5.4l-5.4 5.4M492.8 455.6l5.4 5.4m0-5.4l-5.4 5.4M493.3 454.9l5.4 5.4m0-5.4l-5.4 5.4M493.8 455.4l5.4 5.4m0-5.4l-5.4 5.4M494.3 456.2l5.4 5.4m0-5.4l-5.4 5.4M494.9 455.0l5.4 5.4m0-5.4l-5.4 5.4M495.4 457.0l5.4 5.4m0-5.4l-5.4 5.4M495.9 453.3l5.4 5.4m0-5.4l-5.4 5.4M496.4 454.5l5.4 5.4m0-5.4l-5.4 5.4M496.9 456.4l5.4 5.4m0-5.4l-5.4 5.4M497.4 456.3l5.4 5.4m0-5.4l-5.4 5.4M497.9 454.1l5.4 5.4m0-5.4l-5.4 5.4M498.4 455.4l5.4 5.4m0-5.4l-5.4 5.4M498.9 454.7l5.4 5.4m0-5.4l-5.4 5.4M499.4 456.5l5.4 5.4m0-5.4l-5.4 5.4M500.0 454.2l5.4 5.4m0-5.4l-5.4 5.4M500.5 456.2l5.4 5.4m0-5.4l-5.4 5.4M501.0 454.9l5.4 5.4m0-5.4l-5.4 5.4M501.5 453.5l5.4 5.4m0-5.4l-5.4 5.4M502.0 455.3l5.4 5.4m0-5.4l-5.4 5.4M502.5 454.4l5.4 5.4m0-5.4l-5.4 5.4M503.0 454.7l5.4 5.4m0-5.4l-5.4 5.4M503.5 454.9l5.4 5.4m0-5.4l-5.4 5.4M504.0 457.9l5.4 5.4m0-5.4l-5.4 5.4M504.5 455.9l5.4 5.4m0-5.4l-5.4 5.4M505.1 453.7l5.4 5.4m0-5.4l-5.4 5.4M505.6 454.5l5.4 5.4m0-5.4l-5.4 5.4M506.1 454.6l5.4 5.4m0-5.4l-5.4 5.4M506.6 455.5l5.4 5.4m0-5.4l-5.4 5.4M507.1 454.8l5.4 5.4m0-5.4l-5.4 5.4M507.6 455.5l5.4 5.4m0-5.4l-5.4 5.4M508.1 457.3l5.4 5.4m0-5.4l-5.4 5.4M508.6 455.3l5.4 5.4m0-5.4l-5.4 5.4M509.1 455.3l5.4 5.4m0-5.4l-5.4 5.4M509.6 454.3l5.4 5.4m0-5.4l-5.4 5.4M510.2 457.4l5.4 5.4m0-5.4l-5.4 5.4M510.7 455.1l5.4 5.4m0-5.4l-5.4 5.4M511.2 458.0l5.4 5.4m0-5.4l-5.4 5.4M511.7 453.9l5.4 5.4m0-5.4l-5.4 5.4M512.2 457.7l5.4 5.4m0-5.4l-5.4 5.4M512.7 458.1l5.4 5.4m0-5.4l-5.4 5.4M513.2 456.8l5.4 5.4m0-5.4l-5.4 5.4M513.7 457.5l5.4 5.4m0-5.4l-5.4 5.4" fill="none" stroke="#ff0000" stroke-width="1.45"/>
<text x="90.5" y="309" text-anchor="middle" font-size="13" font-weight="normal" fill="#262626">0</text>
<text x="217.5" y="309" text-anchor="middle" font-size="13" font-weight="normal" fill="#262626">0.5</text>
<text x="345.5" y="309" text-anchor="middle" font-size="13" font-weight="normal" fill="#262626">1</text>
<text x="473.5" y="309" text-anchor="middle" font-size="13" font-weight="normal" fill="#262626">1.5</text>
<text x="601.5" y="309" text-anchor="middle" font-size="13" font-weight="normal" fill="#262626">2</text>
<text x="728.5" y="309" text-anchor="middle" font-size="13" font-weight="normal" fill="#262626">2.5</text>
<text x="84.3" y="200.8" text-anchor="end" font-size="13" font-weight="normal" fill="#262626">5</text>
<text x="84.3" y="248.3" text-anchor="end" font-size="13" font-weight="normal" fill="#262626">0</text>
<text x="84.3" y="295.8" text-anchor="end" font-size="13" font-weight="normal" fill="#262626">-5</text>
<text x="96.7" y="512" text-anchor="middle" font-size="13" font-weight="normal" fill="#262626">-2</text>
<text x="199.7" y="512" text-anchor="middle" font-size="13" font-weight="normal" fill="#262626">-1</text>
<text x="302.7" y="512" text-anchor="middle" font-size="13" font-weight="normal" fill="#262626">0</text>
<text x="405.7" y="512" text-anchor="middle" font-size="13" font-weight="normal" fill="#262626">1</text>
<text x="508.7" y="512" text-anchor="middle" font-size="13" font-weight="normal" fill="#262626">2</text>
<text x="611.7" y="512" text-anchor="middle" font-size="13" font-weight="normal" fill="#262626">3</text>
<text x="714.7" y="512" text-anchor="middle" font-size="13" font-weight="normal" fill="#262626">4</text>
<text x="84.3" y="404.1" text-anchor="end" font-size="13" font-weight="normal" fill="#262626">1</text>
<text x="84.3" y="450.6" text-anchor="end" font-size="13" font-weight="normal" fill="#262626">0</text>
<text x="84.3" y="497.1" text-anchor="end" font-size="13" font-weight="normal" fill="#262626">-1</text>
<text x="90.8" y="191.8" font-size="13" fill="#262626"><tspan font-size="13">×</tspan><tspan dx="2.5">10</tspan><tspan font-size="10.5" dy="-5.5" dx="1">-7</tspan></text>
<text x="694" y="332" font-size="13" fill="#262626"><tspan font-size="13">×</tspan><tspan dx="2.5">10</tspan><tspan font-size="10.5" dy="-5.5" dx="1">-3</tspan></text>
<text x="91" y="394" font-size="13" fill="#262626"><tspan font-size="13">×</tspan><tspan dx="2.5">10</tspan><tspan font-size="10.5" dy="-5.5" dx="1">-6</tspan></text>
<text x="694" y="535.5" font-size="13" fill="#262626"><tspan font-size="13">×</tspan><tspan dx="2.5">10</tspan><tspan font-size="10.5" dy="-5.5" dx="1">-3</tspan></text>
<text x="409.5" y="186.5" text-anchor="middle" font-size="14.95" font-weight="bold" fill="#000">Line scan</text>
<text x="409.5" y="350" text-anchor="middle" font-size="14.95" font-weight="bold" fill="#000">Fitting</text>
<text x="409.5" y="370" text-anchor="middle" font-size="14.95" font-weight="bold" fill="#000">Radius of curvature = 3.7744m</text>
<text x="409.5" y="390" text-anchor="middle" font-size="14.95" font-weight="bold" fill="#000">Fitting Score = 0.30267</text>
</svg>
</body></html>
